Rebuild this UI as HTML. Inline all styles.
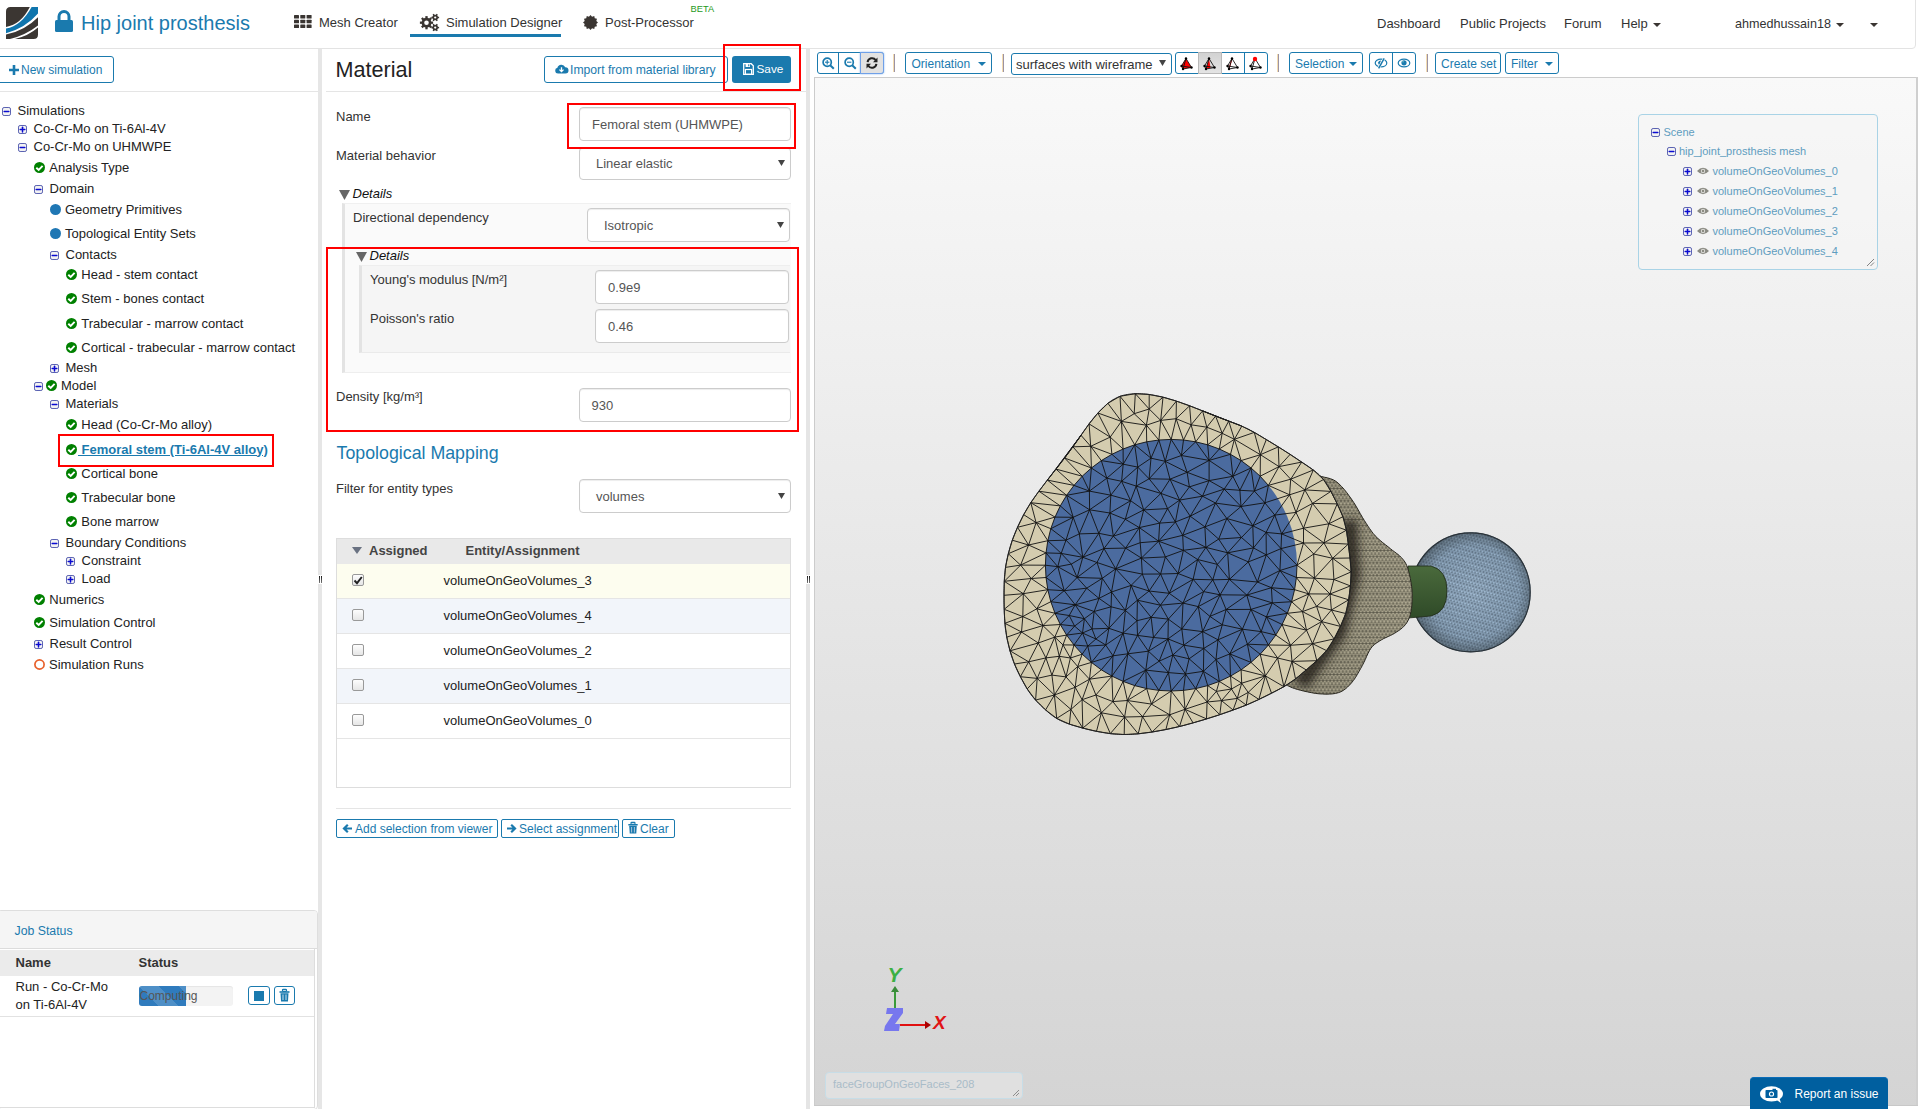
<!DOCTYPE html>
<html><head><meta charset="utf-8"><title>SimScale</title>
<style>
html,body{margin:0;padding:0;width:1918px;height:1109px;overflow:hidden;background:#fff;font-family:"Liberation Sans",sans-serif;}
.a{position:absolute;box-sizing:border-box;}
.t{position:absolute;white-space:nowrap;}
svg{position:absolute;overflow:visible;}
</style></head><body>
<div class="a" style="left:-4px;top:-5px;width:1920px;height:54px;border:1px solid #e3e3e3;border-radius:4px;background:#fff;"></div>
<svg style="left:6px;top:7px" width="32" height="32" viewBox="0 0 32 32">
<defs><clipPath id="lg"><path d="M4.5 0 H32 V27.5 Q32 32 27.5 32 H0 V4.5 Q0 0 4.5 0Z"/></clipPath></defs>
<g clip-path="url(#lg)">
<rect width="32" height="32" fill="#fff"/>
<path d="M0 0H23.8Q15 17.5 0 19.9Z" fill="#3b3632"/>
<path d="M0 21.6Q15.5 18.8 25.6 0H32V6.6Q19 21.5 0 26.2Z" fill="#0f75ad"/>
<path d="M0 27.6Q19 23.5 32 10.2V18.4Q20 27.8 4 32H0Z" fill="#3b3632"/>
<path d="M9 32Q22 29.2 32 20.6V32Z" fill="#3b3632"/>
</g></svg>
<svg style="left:55px;top:10px" width="18" height="22" viewBox="0 0 18 22">
<path d="M4 10 V6.5 A5 5 0 0 1 14 6.5 V10" stroke="#1a7aae" stroke-width="3" fill="none"/>
<rect x="0" y="10" width="18" height="12" rx="1.5" fill="#1a7aae"/></svg>
<div class="t" style="left:81px;top:13.07px;font-size:20px;line-height:20px;color:#1a7aae;font-weight:normal;font-style:normal;">Hip joint prosthesis</div>
<svg style="left:294px;top:15px" width="18" height="14" viewBox="0 0 18 14"><rect x="0.0" y="0.0" width="5" height="3.6" rx="0.6" fill="#3a3532"/><rect x="6.3" y="0.0" width="5" height="3.6" rx="0.6" fill="#3a3532"/><rect x="12.6" y="0.0" width="5" height="3.6" rx="0.6" fill="#3a3532"/><rect x="0.0" y="4.7" width="5" height="3.6" rx="0.6" fill="#3a3532"/><rect x="6.3" y="4.7" width="5" height="3.6" rx="0.6" fill="#3a3532"/><rect x="12.6" y="4.7" width="5" height="3.6" rx="0.6" fill="#3a3532"/><rect x="0.0" y="9.4" width="5" height="3.6" rx="0.6" fill="#3a3532"/><rect x="6.3" y="9.4" width="5" height="3.6" rx="0.6" fill="#3a3532"/><rect x="12.6" y="9.4" width="5" height="3.6" rx="0.6" fill="#3a3532"/></svg>
<div class="t" style="left:319px;top:16.00px;font-size:13px;line-height:13px;color:#333;font-weight:normal;font-style:normal;">Mesh Creator</div>
<svg style="left:416px;top:10px" width="30" height="26" viewBox="0 0 30 26"><circle cx="10.5" cy="12.7" r="4.9" fill="#3a3532"/><rect x="9.35" y="6.10" width="2.3" height="2.70" fill="#3a3532" transform="rotate(0.0 10.5 12.7)"/><rect x="9.35" y="6.10" width="2.3" height="2.70" fill="#3a3532" transform="rotate(45.0 10.5 12.7)"/><rect x="9.35" y="6.10" width="2.3" height="2.70" fill="#3a3532" transform="rotate(90.0 10.5 12.7)"/><rect x="9.35" y="6.10" width="2.3" height="2.70" fill="#3a3532" transform="rotate(135.0 10.5 12.7)"/><rect x="9.35" y="6.10" width="2.3" height="2.70" fill="#3a3532" transform="rotate(180.0 10.5 12.7)"/><rect x="9.35" y="6.10" width="2.3" height="2.70" fill="#3a3532" transform="rotate(225.0 10.5 12.7)"/><rect x="9.35" y="6.10" width="2.3" height="2.70" fill="#3a3532" transform="rotate(270.0 10.5 12.7)"/><rect x="9.35" y="6.10" width="2.3" height="2.70" fill="#3a3532" transform="rotate(315.0 10.5 12.7)"/><circle cx="10.5" cy="12.7" r="2.3" fill="#fff"/><circle cx="19.2" cy="7.5" r="2.8" fill="#3a3532"/><rect x="18.45" y="3.60" width="1.5" height="2.10" fill="#3a3532" transform="rotate(30.0 19.2 7.5)"/><rect x="18.45" y="3.60" width="1.5" height="2.10" fill="#3a3532" transform="rotate(90.0 19.2 7.5)"/><rect x="18.45" y="3.60" width="1.5" height="2.10" fill="#3a3532" transform="rotate(150.0 19.2 7.5)"/><rect x="18.45" y="3.60" width="1.5" height="2.10" fill="#3a3532" transform="rotate(210.0 19.2 7.5)"/><rect x="18.45" y="3.60" width="1.5" height="2.10" fill="#3a3532" transform="rotate(270.0 19.2 7.5)"/><rect x="18.45" y="3.60" width="1.5" height="2.10" fill="#3a3532" transform="rotate(330.0 19.2 7.5)"/><circle cx="19.2" cy="7.5" r="1.1" fill="#fff"/><circle cx="19.2" cy="17.6" r="2.8" fill="#3a3532"/><rect x="18.45" y="13.70" width="1.5" height="2.10" fill="#3a3532" transform="rotate(30.0 19.2 17.6)"/><rect x="18.45" y="13.70" width="1.5" height="2.10" fill="#3a3532" transform="rotate(90.0 19.2 17.6)"/><rect x="18.45" y="13.70" width="1.5" height="2.10" fill="#3a3532" transform="rotate(150.0 19.2 17.6)"/><rect x="18.45" y="13.70" width="1.5" height="2.10" fill="#3a3532" transform="rotate(210.0 19.2 17.6)"/><rect x="18.45" y="13.70" width="1.5" height="2.10" fill="#3a3532" transform="rotate(270.0 19.2 17.6)"/><rect x="18.45" y="13.70" width="1.5" height="2.10" fill="#3a3532" transform="rotate(330.0 19.2 17.6)"/><circle cx="19.2" cy="17.6" r="1.1" fill="#fff"/></svg>
<div class="t" style="left:446px;top:16.00px;font-size:13px;line-height:13px;color:#333;font-weight:normal;font-style:normal;">Simulation Designer</div>
<div class="a" style="left:410px;top:34px;width:151px;height:3px;background:#1a7aae;"></div>
<svg style="left:583px;top:15px" width="15" height="15" viewBox="0 0 18 18"><polygon points="18.00,9.00 15.95,10.86 16.79,13.50 14.09,14.09 13.50,16.79 10.86,15.95 9.00,18.00 7.14,15.95 4.50,16.79 3.91,14.09 1.21,13.50 2.05,10.86 0.00,9.00 2.05,7.14 1.21,4.50 3.91,3.91 4.50,1.21 7.14,2.05 9.00,0.00 10.86,2.05 13.50,1.21 14.09,3.91 16.79,4.50 15.95,7.14 " fill="#3a3532"/></svg>
<div class="t" style="left:605px;top:16.00px;font-size:13px;line-height:13px;color:#333;font-weight:normal;font-style:normal;">Post-Processor</div>
<div class="t" style="left:690.5px;top:5.13px;font-size:9.3px;line-height:9.3px;color:#1e9a22;font-weight:normal;font-style:normal;">BETA</div>
<div class="t" style="left:1377px;top:16.50px;font-size:13px;line-height:13px;color:#333;font-weight:normal;font-style:normal;">Dashboard</div>
<div class="t" style="left:1460px;top:16.50px;font-size:13px;line-height:13px;color:#333;font-weight:normal;font-style:normal;">Public Projects</div>
<div class="t" style="left:1564px;top:16.50px;font-size:13px;line-height:13px;color:#333;font-weight:normal;font-style:normal;">Forum</div>
<div class="t" style="left:1621px;top:16.50px;font-size:13px;line-height:13px;color:#333;font-weight:normal;font-style:normal;">Help</div>
<svg style="left:1653px;top:23px" width="8" height="4" viewBox="0 0 8 4"><polygon points="0,0 8,0 4.0,4" fill="#3a3532"/></svg>
<div class="t" style="left:1735px;top:17.53px;font-size:12.6px;line-height:12.6px;color:#333;font-weight:normal;font-style:normal;">ahmedhussain18</div>
<svg style="left:1836px;top:23px" width="8" height="4" viewBox="0 0 8 4"><polygon points="0,0 8,0 4.0,4" fill="#3a3532"/></svg>
<svg style="left:1870px;top:23px" width="8" height="4" viewBox="0 0 8 4"><polygon points="0,0 8,0 4.0,4" fill="#3a3532"/></svg>
<div class="a" style="left:-4px;top:56px;width:118px;height:27px;border:1px solid #1a7aae;border-radius:3px;"></div>
<svg style="left:9px;top:65px" width="10" height="10" viewBox="0 0 10 10"><path d="M5 0V10M0 5H10" stroke="#1a7aae" stroke-width="2.6"/></svg>
<div class="t" style="left:21px;top:63.84px;font-size:12px;line-height:12px;color:#1a7aae;font-weight:normal;font-style:normal;">New simulation</div>
<div class="a" style="left:0px;top:91px;width:318px;height:1px;background:#e5e5e5;"></div>
<svg style="left:2px;top:107px" width="9" height="9" viewBox="0 0 9 9"><rect x="0.5" y="0.5" width="8" height="8" rx="1.6" fill="#f2f2f2" stroke="#5a62b2" stroke-width="1"/><path d="M2.2 4.6H6.8" stroke="#0a0ad2" stroke-width="1.5" stroke-linecap="round"/></svg>
<div class="t" style="left:17.5px;top:103.70px;font-size:13px;line-height:13px;color:#222;font-weight:normal;font-style:normal;">Simulations</div>
<svg style="left:18px;top:125px" width="9" height="9" viewBox="0 0 9 9"><rect x="0.5" y="0.5" width="8" height="8" rx="1.6" fill="#f2f2f2" stroke="#5a62b2" stroke-width="1"/><path d="M2.2 4.6H6.8" stroke="#0a0ad2" stroke-width="1.5" stroke-linecap="round"/><path d="M4.5 2.3V6.9" stroke="#0a0ad2" stroke-width="1.5" stroke-linecap="round"/></svg>
<div class="t" style="left:33.5px;top:121.70px;font-size:13px;line-height:13px;color:#222;font-weight:normal;font-style:normal;">Co-Cr-Mo on Ti-6Al-4V</div>
<svg style="left:18px;top:143px" width="9" height="9" viewBox="0 0 9 9"><rect x="0.5" y="0.5" width="8" height="8" rx="1.6" fill="#f2f2f2" stroke="#5a62b2" stroke-width="1"/><path d="M2.2 4.6H6.8" stroke="#0a0ad2" stroke-width="1.5" stroke-linecap="round"/></svg>
<div class="t" style="left:33.5px;top:139.80px;font-size:13px;line-height:13px;color:#222;font-weight:normal;font-style:normal;">Co-Cr-Mo on UHMWPE</div>
<svg style="left:34px;top:162px" width="11" height="11" viewBox="0 0 11 11"><circle cx="5.5" cy="5.5" r="5.5" fill="#008000"/><path d="M2.3 5.7 L4.7 8 L8.6 3.9" stroke="#fff" stroke-width="1.9" fill="none"/></svg>
<div class="t" style="left:49.3px;top:160.50px;font-size:13px;line-height:13px;color:#222;font-weight:normal;font-style:normal;">Analysis Type</div>
<svg style="left:34px;top:185px" width="9" height="9" viewBox="0 0 9 9"><rect x="0.5" y="0.5" width="8" height="8" rx="1.6" fill="#f2f2f2" stroke="#5a62b2" stroke-width="1"/><path d="M2.2 4.6H6.8" stroke="#0a0ad2" stroke-width="1.5" stroke-linecap="round"/></svg>
<div class="t" style="left:49.5px;top:181.80px;font-size:13px;line-height:13px;color:#222;font-weight:normal;font-style:normal;">Domain</div>
<svg style="left:50px;top:204px" width="11" height="11" viewBox="0 0 11 11"><circle cx="5.5" cy="5.5" r="5.5" fill="#1f77b4"/></svg>
<div class="t" style="left:65px;top:202.60px;font-size:13px;line-height:13px;color:#222;font-weight:normal;font-style:normal;">Geometry Primitives</div>
<svg style="left:50px;top:228px" width="11" height="11" viewBox="0 0 11 11"><circle cx="5.5" cy="5.5" r="5.5" fill="#1f77b4"/></svg>
<div class="t" style="left:65px;top:226.50px;font-size:13px;line-height:13px;color:#222;font-weight:normal;font-style:normal;">Topological Entity Sets</div>
<svg style="left:50px;top:251px" width="9" height="9" viewBox="0 0 9 9"><rect x="0.5" y="0.5" width="8" height="8" rx="1.6" fill="#f2f2f2" stroke="#5a62b2" stroke-width="1"/><path d="M2.2 4.6H6.8" stroke="#0a0ad2" stroke-width="1.5" stroke-linecap="round"/></svg>
<div class="t" style="left:65.5px;top:247.60px;font-size:13px;line-height:13px;color:#222;font-weight:normal;font-style:normal;">Contacts</div>
<svg style="left:66px;top:269px" width="11" height="11" viewBox="0 0 11 11"><circle cx="5.5" cy="5.5" r="5.5" fill="#008000"/><path d="M2.3 5.7 L4.7 8 L8.6 3.9" stroke="#fff" stroke-width="1.9" fill="none"/></svg>
<div class="t" style="left:81.3px;top:268.40px;font-size:13px;line-height:13px;color:#222;font-weight:normal;font-style:normal;">Head - stem contact</div>
<svg style="left:66px;top:293px" width="11" height="11" viewBox="0 0 11 11"><circle cx="5.5" cy="5.5" r="5.5" fill="#008000"/><path d="M2.3 5.7 L4.7 8 L8.6 3.9" stroke="#fff" stroke-width="1.9" fill="none"/></svg>
<div class="t" style="left:81.3px;top:292.40px;font-size:13px;line-height:13px;color:#222;font-weight:normal;font-style:normal;">Stem - bones contact</div>
<svg style="left:66px;top:318px" width="11" height="11" viewBox="0 0 11 11"><circle cx="5.5" cy="5.5" r="5.5" fill="#008000"/><path d="M2.3 5.7 L4.7 8 L8.6 3.9" stroke="#fff" stroke-width="1.9" fill="none"/></svg>
<div class="t" style="left:81.3px;top:316.80px;font-size:13px;line-height:13px;color:#222;font-weight:normal;font-style:normal;">Trabecular - marrow contact</div>
<svg style="left:66px;top:342px" width="11" height="11" viewBox="0 0 11 11"><circle cx="5.5" cy="5.5" r="5.5" fill="#008000"/><path d="M2.3 5.7 L4.7 8 L8.6 3.9" stroke="#fff" stroke-width="1.9" fill="none"/></svg>
<div class="t" style="left:81.3px;top:340.80px;font-size:13px;line-height:13px;color:#222;font-weight:normal;font-style:normal;">Cortical - trabecular - marrow contact</div>
<svg style="left:50px;top:364px" width="9" height="9" viewBox="0 0 9 9"><rect x="0.5" y="0.5" width="8" height="8" rx="1.6" fill="#f2f2f2" stroke="#5a62b2" stroke-width="1"/><path d="M2.2 4.6H6.8" stroke="#0a0ad2" stroke-width="1.5" stroke-linecap="round"/><path d="M4.5 2.3V6.9" stroke="#0a0ad2" stroke-width="1.5" stroke-linecap="round"/></svg>
<div class="t" style="left:65.5px;top:361.40px;font-size:13px;line-height:13px;color:#222;font-weight:normal;font-style:normal;">Mesh</div>
<svg style="left:34px;top:382px" width="9" height="9" viewBox="0 0 9 9"><rect x="0.5" y="0.5" width="8" height="8" rx="1.6" fill="#f2f2f2" stroke="#5a62b2" stroke-width="1"/><path d="M2.2 4.6H6.8" stroke="#0a0ad2" stroke-width="1.5" stroke-linecap="round"/></svg>
<svg style="left:46px;top:380px" width="11" height="11" viewBox="0 0 11 11"><circle cx="5.5" cy="5.5" r="5.5" fill="#008000"/><path d="M2.3 5.7 L4.7 8 L8.6 3.9" stroke="#fff" stroke-width="1.9" fill="none"/></svg>
<div class="t" style="left:61px;top:379.40px;font-size:13px;line-height:13px;color:#222;font-weight:normal;font-style:normal;">Model</div>
<svg style="left:50px;top:400px" width="9" height="9" viewBox="0 0 9 9"><rect x="0.5" y="0.5" width="8" height="8" rx="1.6" fill="#f2f2f2" stroke="#5a62b2" stroke-width="1"/><path d="M2.2 4.6H6.8" stroke="#0a0ad2" stroke-width="1.5" stroke-linecap="round"/></svg>
<div class="t" style="left:65.5px;top:397.40px;font-size:13px;line-height:13px;color:#222;font-weight:normal;font-style:normal;">Materials</div>
<svg style="left:66px;top:419px" width="11" height="11" viewBox="0 0 11 11"><circle cx="5.5" cy="5.5" r="5.5" fill="#008000"/><path d="M2.3 5.7 L4.7 8 L8.6 3.9" stroke="#fff" stroke-width="1.9" fill="none"/></svg>
<div class="t" style="left:81.3px;top:418.40px;font-size:13px;line-height:13px;color:#222;font-weight:normal;font-style:normal;">Head (Co-Cr-Mo alloy)</div>
<svg style="left:66px;top:444px" width="11" height="11" viewBox="0 0 11 11"><circle cx="5.5" cy="5.5" r="5.5" fill="#008000"/><path d="M2.3 5.7 L4.7 8 L8.6 3.9" stroke="#fff" stroke-width="1.9" fill="none"/></svg>
<div class="t" style="left:78px;top:442.50px;font-size:13px;line-height:13px;color:#1a7aae;font-weight:bold;font-style:normal;text-decoration:underline;">&nbsp;Femoral stem (Ti-6Al-4V alloy)</div>
<div class="a" style="left:58px;top:434px;width:216px;height:33px;border:2px solid #f00;"></div>
<svg style="left:66px;top:468px" width="11" height="11" viewBox="0 0 11 11"><circle cx="5.5" cy="5.5" r="5.5" fill="#008000"/><path d="M2.3 5.7 L4.7 8 L8.6 3.9" stroke="#fff" stroke-width="1.9" fill="none"/></svg>
<div class="t" style="left:81.3px;top:466.50px;font-size:13px;line-height:13px;color:#222;font-weight:normal;font-style:normal;">Cortical bone</div>
<svg style="left:66px;top:492px" width="11" height="11" viewBox="0 0 11 11"><circle cx="5.5" cy="5.5" r="5.5" fill="#008000"/><path d="M2.3 5.7 L4.7 8 L8.6 3.9" stroke="#fff" stroke-width="1.9" fill="none"/></svg>
<div class="t" style="left:81.3px;top:490.80px;font-size:13px;line-height:13px;color:#222;font-weight:normal;font-style:normal;">Trabecular bone</div>
<svg style="left:66px;top:516px" width="11" height="11" viewBox="0 0 11 11"><circle cx="5.5" cy="5.5" r="5.5" fill="#008000"/><path d="M2.3 5.7 L4.7 8 L8.6 3.9" stroke="#fff" stroke-width="1.9" fill="none"/></svg>
<div class="t" style="left:81.3px;top:514.90px;font-size:13px;line-height:13px;color:#222;font-weight:normal;font-style:normal;">Bone marrow</div>
<svg style="left:50px;top:539px" width="9" height="9" viewBox="0 0 9 9"><rect x="0.5" y="0.5" width="8" height="8" rx="1.6" fill="#f2f2f2" stroke="#5a62b2" stroke-width="1"/><path d="M2.2 4.6H6.8" stroke="#0a0ad2" stroke-width="1.5" stroke-linecap="round"/></svg>
<div class="t" style="left:65.5px;top:535.70px;font-size:13px;line-height:13px;color:#222;font-weight:normal;font-style:normal;">Boundary Conditions</div>
<svg style="left:66px;top:557px" width="9" height="9" viewBox="0 0 9 9"><rect x="0.5" y="0.5" width="8" height="8" rx="1.6" fill="#f2f2f2" stroke="#5a62b2" stroke-width="1"/><path d="M2.2 4.6H6.8" stroke="#0a0ad2" stroke-width="1.5" stroke-linecap="round"/><path d="M4.5 2.3V6.9" stroke="#0a0ad2" stroke-width="1.5" stroke-linecap="round"/></svg>
<div class="t" style="left:81.5px;top:553.70px;font-size:13px;line-height:13px;color:#222;font-weight:normal;font-style:normal;">Constraint</div>
<svg style="left:66px;top:575px" width="9" height="9" viewBox="0 0 9 9"><rect x="0.5" y="0.5" width="8" height="8" rx="1.6" fill="#f2f2f2" stroke="#5a62b2" stroke-width="1"/><path d="M2.2 4.6H6.8" stroke="#0a0ad2" stroke-width="1.5" stroke-linecap="round"/><path d="M4.5 2.3V6.9" stroke="#0a0ad2" stroke-width="1.5" stroke-linecap="round"/></svg>
<div class="t" style="left:81.5px;top:571.70px;font-size:13px;line-height:13px;color:#222;font-weight:normal;font-style:normal;">Load</div>
<svg style="left:34px;top:594px" width="11" height="11" viewBox="0 0 11 11"><circle cx="5.5" cy="5.5" r="5.5" fill="#008000"/><path d="M2.3 5.7 L4.7 8 L8.6 3.9" stroke="#fff" stroke-width="1.9" fill="none"/></svg>
<div class="t" style="left:49.3px;top:592.50px;font-size:13px;line-height:13px;color:#222;font-weight:normal;font-style:normal;">Numerics</div>
<svg style="left:34px;top:617px" width="11" height="11" viewBox="0 0 11 11"><circle cx="5.5" cy="5.5" r="5.5" fill="#008000"/><path d="M2.3 5.7 L4.7 8 L8.6 3.9" stroke="#fff" stroke-width="1.9" fill="none"/></svg>
<div class="t" style="left:49.3px;top:616.20px;font-size:13px;line-height:13px;color:#222;font-weight:normal;font-style:normal;">Simulation Control</div>
<svg style="left:34px;top:640px" width="9" height="9" viewBox="0 0 9 9"><rect x="0.5" y="0.5" width="8" height="8" rx="1.6" fill="#f2f2f2" stroke="#5a62b2" stroke-width="1"/><path d="M2.2 4.6H6.8" stroke="#0a0ad2" stroke-width="1.5" stroke-linecap="round"/><path d="M4.5 2.3V6.9" stroke="#0a0ad2" stroke-width="1.5" stroke-linecap="round"/></svg>
<div class="t" style="left:49.5px;top:637.40px;font-size:13px;line-height:13px;color:#222;font-weight:normal;font-style:normal;">Result Control</div>
<svg style="left:34px;top:659px" width="11" height="11" viewBox="0 0 11 11"><circle cx="5.5" cy="5.5" r="4.6" fill="none" stroke="#e8602a" stroke-width="1.7"/></svg>
<div class="t" style="left:49px;top:658.20px;font-size:13px;line-height:13px;color:#222;font-weight:normal;font-style:normal;">Simulation Runs</div>
<div class="a" style="left:-3px;top:910px;width:321px;height:200px;border:1px solid #dedede;border-radius:4px;background:#fff;"></div>
<div class="a" style="left:-2px;top:911px;width:319px;height:38px;background:#f5f5f5;border-bottom:1px solid #dcdcdc;border-radius:3px 3px 0 0;"></div>
<div class="t" style="left:14.5px;top:924.59px;font-size:12.3px;line-height:12.3px;color:#1a7aae;font-weight:normal;font-style:normal;">Job Status</div>
<div class="a" style="left:-2px;top:949px;width:317px;height:159px;border-right:1px solid #ddd;border-bottom:1px solid #ddd;"></div>
<div class="a" style="left:0px;top:950px;width:314px;height:26px;background:#ebebeb;"></div>
<div class="t" style="left:15.5px;top:956.00px;font-size:13px;line-height:13px;color:#333;font-weight:bold;font-style:normal;">Name</div>
<div class="t" style="left:138.5px;top:956.00px;font-size:13px;line-height:13px;color:#333;font-weight:bold;font-style:normal;">Status</div>
<div class="t" style="left:15.5px;top:980.00px;font-size:13px;line-height:13px;color:#222;font-weight:normal;font-style:normal;">Run - Co-Cr-Mo</div>
<div class="t" style="left:15.5px;top:997.50px;font-size:13px;line-height:13px;color:#222;font-weight:normal;font-style:normal;">on Ti-6Al-4V</div>
<div class="a" style="left:0px;top:1016px;width:314px;height:1px;background:#e2e2e2;"></div>
<div class="a" style="left:139px;top:986px;width:94px;height:20px;background:#f3f3f3;border-radius:3px;box-shadow:inset 0 1px 1px rgba(0,0,0,.06);"></div>
<div class="a" style="left:139px;top:986px;width:47px;height:20px;border-radius:3px 0 0 3px;background:#2f7bbd;background-image:linear-gradient(45deg,rgba(255,255,255,.15) 25%,transparent 25%,transparent 50%,rgba(255,255,255,.15) 50%,rgba(255,255,255,.15) 75%,transparent 75%,transparent);background-size:40px 40px;"></div>
<div class="t" style="left:139.5px;top:990.34px;font-size:12px;line-height:12px;color:#555;font-weight:normal;font-style:normal;">Computing</div>
<div class="a" style="left:248px;top:986px;width:22px;height:19px;border:1px solid #1a7aae;border-radius:3px;"></div>
<div class="a" style="left:254px;top:991px;width:10px;height:10px;background:#1a7aae;"></div>
<div class="a" style="left:274px;top:986px;width:21px;height:19px;border:1px solid #1a7aae;border-radius:3px;"></div>
<svg style="left:279px;top:989px" width="11" height="13" viewBox="0 0 11 13"><rect x="3.5" y="0.3" width="4" height="2" rx="0.8" fill="none" stroke="#1a7aae" stroke-width="1.2"/><rect x="0.5" y="2.2" width="10" height="1.6" fill="#1a7aae"/><path d="M1.5 4.2H9.5L9 12.5H2Z" fill="#1a7aae"/><path d="M4 5.5V11M7 5.5V11" stroke="#cfe3ef" stroke-width="1"/></svg>
<div class="a" style="left:318px;top:49px;width:4px;height:1060px;background:#e6e6e6;"></div>
<div class="t" style="left:335.5px;top:58.72px;font-size:21.6px;line-height:21.6px;color:#222;font-weight:normal;font-style:normal;">Material</div>
<div class="a" style="left:544px;top:56px;width:184px;height:27px;border:1px solid #1a7aae;border-radius:3px;"></div>
<svg style="left:555px;top:64px" width="13" height="10" viewBox="0 0 14 11" preserveAspectRatio="none"><path d="M3.2 10.5 A3.2 3.2 0 0 1 2.6 4.2 A4.4 4.4 0 0 1 11 3.6 A3.4 3.4 0 0 1 11.2 10.5Z" fill="#1a7aae"/><path d="M7 3.5V8.2M4.8 6.2L7 8.4L9.2 6.2" stroke="#fff" stroke-width="1.4" fill="none"/></svg>
<div class="t" style="left:570px;top:63.67px;font-size:12.2px;line-height:12.2px;color:#1a7aae;font-weight:normal;font-style:normal;">Import from material library</div>
<div class="a" style="left:732px;top:56px;width:59px;height:27px;background:#1a7aae;border-radius:3px;"></div>
<svg style="left:743px;top:63px" width="11" height="12" viewBox="0 0 11 12"><path d="M0.7 0.7H8.2L10.3 2.8V11.3H0.7Z" fill="none" stroke="#fff" stroke-width="1.3"/><rect x="2.6" y="0.7" width="4.4" height="3.3" fill="#fff"/><rect x="5.2" y="1.3" width="1.1" height="2" fill="#1a7aae"/><rect x="2.4" y="6.5" width="6.2" height="4.8" fill="none" stroke="#fff" stroke-width="1.2"/></svg>
<div class="t" style="left:756.5px;top:64.01px;font-size:11.8px;line-height:11.8px;color:#fff;font-weight:normal;font-style:normal;">Save</div>
<div class="a" style="left:723px;top:44px;width:78px;height:47px;border:2px solid #f00;"></div>
<div class="a" style="left:326px;top:91px;width:480px;height:1px;background:#e5e5e5;"></div>
<div class="t" style="left:336px;top:109.80px;font-size:13px;line-height:13px;color:#333;font-weight:normal;font-style:normal;">Name</div>
<div class="a" style="left:579px;top:107px;width:212px;height:34px;border:1px solid #ccc;border-radius:4px;background:#fff;box-shadow:inset 0 1px 1px rgba(0,0,0,.075);"></div>
<div class="t" style="left:592px;top:117.80px;font-size:13px;line-height:13px;color:#555;font-weight:normal;font-style:normal;">Femoral stem (UHMWPE)</div>
<div class="t" style="left:336px;top:149.00px;font-size:13px;line-height:13px;color:#333;font-weight:normal;font-style:normal;">Material behavior</div>
<div class="a" style="left:579px;top:147px;width:212px;height:33px;border:1px solid #ccc;border-radius:4px;background:#fff;box-shadow:inset 0 1px 1px rgba(0,0,0,.075);"></div>
<div class="t" style="left:596px;top:157.30px;font-size:13px;line-height:13px;color:#555;font-weight:normal;font-style:normal;">Linear elastic</div>
<svg style="left:778px;top:160.0px" width="7" height="6" viewBox="0 0 7 6"><polygon points="0,0 7,0 3.5,6" fill="#444"/></svg>
<div class="a" style="left:567px;top:103px;width:229px;height:46px;border:2px solid #f00;"></div>
<svg style="left:339px;top:190px" width="11" height="10" viewBox="0 0 11 10"><polygon points="0,0 11,0 5.5,10" fill="#666"/></svg>
<div class="t" style="left:352.5px;top:187.00px;font-size:13px;line-height:13px;color:#111;font-weight:normal;font-style:italic;">Details</div>
<div class="a" style="left:342px;top:203px;width:449px;height:170px;background:#fafafa;border-left:3px solid #e3e3e3;border-top:1px solid #f0f0f0;border-bottom:1px solid #eee;"></div>
<div class="t" style="left:353px;top:211.00px;font-size:13px;line-height:13px;color:#333;font-weight:normal;font-style:normal;">Directional dependency</div>
<div class="a" style="left:587px;top:208px;width:203px;height:34px;border:1px solid #ccc;border-radius:4px;background:#fff;box-shadow:inset 0 1px 1px rgba(0,0,0,.075);"></div>
<div class="t" style="left:604px;top:218.80px;font-size:13px;line-height:13px;color:#555;font-weight:normal;font-style:normal;">Isotropic</div>
<svg style="left:777px;top:221.5px" width="7" height="6" viewBox="0 0 7 6"><polygon points="0,0 7,0 3.5,6" fill="#444"/></svg>
<svg style="left:356px;top:252px" width="11" height="10" viewBox="0 0 11 10"><polygon points="0,0 11,0 5.5,10" fill="#666"/></svg>
<div class="t" style="left:369.5px;top:249.00px;font-size:13px;line-height:13px;color:#111;font-weight:normal;font-style:italic;">Details</div>
<div class="a" style="left:359px;top:265px;width:431px;height:88px;background:#f5f5f5;border-left:3px solid #e3e3e3;border-top:1px solid #eee;border-bottom:1px solid #eaeaea;"></div>
<div class="t" style="left:370px;top:273.40px;font-size:13px;line-height:13px;color:#333;font-weight:normal;font-style:normal;">Young's modulus [N/m&sup2;]</div>
<div class="a" style="left:595px;top:270px;width:194px;height:34px;border:1px solid #ccc;border-radius:4px;background:#fff;box-shadow:inset 0 1px 1px rgba(0,0,0,.075);"></div>
<div class="t" style="left:608px;top:280.80px;font-size:13px;line-height:13px;color:#555;font-weight:normal;font-style:normal;">0.9e9</div>
<div class="t" style="left:370px;top:312.00px;font-size:13px;line-height:13px;color:#333;font-weight:normal;font-style:normal;">Poisson's ratio</div>
<div class="a" style="left:595px;top:309px;width:194px;height:34px;border:1px solid #ccc;border-radius:4px;background:#fff;box-shadow:inset 0 1px 1px rgba(0,0,0,.075);"></div>
<div class="t" style="left:608px;top:319.80px;font-size:13px;line-height:13px;color:#555;font-weight:normal;font-style:normal;">0.46</div>
<div class="t" style="left:336px;top:390.30px;font-size:13px;line-height:13px;color:#333;font-weight:normal;font-style:normal;">Density [kg/m&sup3;]</div>
<div class="a" style="left:579px;top:388px;width:212px;height:34px;border:1px solid #ccc;border-radius:4px;background:#fff;box-shadow:inset 0 1px 1px rgba(0,0,0,.075);"></div>
<div class="t" style="left:591.5px;top:398.80px;font-size:13px;line-height:13px;color:#555;font-weight:normal;font-style:normal;">930</div>
<div class="a" style="left:326px;top:247px;width:473px;height:185px;border:2px solid #f00;"></div>
<div class="t" style="left:336.5px;top:444.93px;font-size:17.8px;line-height:17.8px;color:#1a7aae;font-weight:normal;font-style:normal;">Topological Mapping</div>
<div class="t" style="left:336px;top:482.00px;font-size:13px;line-height:13px;color:#333;font-weight:normal;font-style:normal;">Filter for entity types</div>
<div class="a" style="left:579px;top:479px;width:212px;height:34px;border:1px solid #ccc;border-radius:4px;background:#fff;box-shadow:inset 0 1px 1px rgba(0,0,0,.075);"></div>
<div class="t" style="left:596px;top:489.80px;font-size:13px;line-height:13px;color:#555;font-weight:normal;font-style:normal;">volumes</div>
<svg style="left:778px;top:492.5px" width="7" height="6" viewBox="0 0 7 6"><polygon points="0,0 7,0 3.5,6" fill="#444"/></svg>
<div class="a" style="left:336px;top:538px;width:455px;height:250px;border:1px solid #ddd;background:#fff;"></div>
<div class="a" style="left:337px;top:539px;width:453px;height:25px;background:#e9e9e9;"></div>
<svg style="left:352px;top:547px" width="10" height="7" viewBox="0 0 10 7"><polygon points="0,0 10,0 5,7" fill="#6a7282"/></svg>
<div class="t" style="left:369px;top:544.00px;font-size:13px;line-height:13px;color:#444;font-weight:bold;font-style:normal;">Assigned</div>
<div class="t" style="left:465.5px;top:544.00px;font-size:13px;line-height:13px;color:#444;font-weight:bold;font-style:normal;">Entity/Assignment</div>
<div class="a" style="left:337px;top:564px;width:453px;height:35px;background:#fdfdef;border-bottom:1px solid #e5e5e5;"></div>
<div class="a" style="left:352px;top:574px;width:12px;height:12px;border:1px solid #999;border-radius:2px;background:linear-gradient(#fdfdfd,#e6e6e6);"></div>
<svg style="left:353px;top:576px" width="10" height="9" viewBox="0 0 10 9"><path d="M1.5 4.5L4 7.2L8.8 1" stroke="#222" stroke-width="1.9" fill="none"/></svg>
<div class="t" style="left:443.5px;top:574.00px;font-size:13px;line-height:13px;color:#222;font-weight:normal;font-style:normal;">volumeOnGeoVolumes_3</div>
<div class="a" style="left:337px;top:599px;width:453px;height:35px;background:#f2f5fa;border-bottom:1px solid #e5e5e5;"></div>
<div class="a" style="left:352px;top:609px;width:12px;height:12px;border:1px solid #999;border-radius:2px;background:linear-gradient(#fdfdfd,#e6e6e6);"></div>
<div class="t" style="left:443.5px;top:609.00px;font-size:13px;line-height:13px;color:#222;font-weight:normal;font-style:normal;">volumeOnGeoVolumes_4</div>
<div class="a" style="left:337px;top:634px;width:453px;height:35px;background:#fff;border-bottom:1px solid #e5e5e5;"></div>
<div class="a" style="left:352px;top:644px;width:12px;height:12px;border:1px solid #999;border-radius:2px;background:linear-gradient(#fdfdfd,#e6e6e6);"></div>
<div class="t" style="left:443.5px;top:644.00px;font-size:13px;line-height:13px;color:#222;font-weight:normal;font-style:normal;">volumeOnGeoVolumes_2</div>
<div class="a" style="left:337px;top:669px;width:453px;height:35px;background:#f2f5fa;border-bottom:1px solid #e5e5e5;"></div>
<div class="a" style="left:352px;top:679px;width:12px;height:12px;border:1px solid #999;border-radius:2px;background:linear-gradient(#fdfdfd,#e6e6e6);"></div>
<div class="t" style="left:443.5px;top:679.00px;font-size:13px;line-height:13px;color:#222;font-weight:normal;font-style:normal;">volumeOnGeoVolumes_1</div>
<div class="a" style="left:337px;top:704px;width:453px;height:35px;background:#fff;border-bottom:1px solid #e5e5e5;"></div>
<div class="a" style="left:352px;top:714px;width:12px;height:12px;border:1px solid #999;border-radius:2px;background:linear-gradient(#fdfdfd,#e6e6e6);"></div>
<div class="t" style="left:443.5px;top:714.00px;font-size:13px;line-height:13px;color:#222;font-weight:normal;font-style:normal;">volumeOnGeoVolumes_0</div>
<div class="a" style="left:336px;top:808px;width:455px;height:1px;background:#e5e5e5;"></div>
<div class="a" style="left:336px;top:819px;width:162px;height:19px;border:1px solid #1a7aae;border-radius:2px;"></div>
<div class="t" style="left:355px;top:822.84px;font-size:12px;line-height:12px;color:#1a7aae;font-weight:normal;font-style:normal;">Add selection from viewer</div>
<svg style="left:342px;top:823px" width="11" height="11" viewBox="0 0 11 11"><path d="M10 5.5H2.5M5.8 1.8L2 5.5L5.8 9.2" stroke="#1a7aae" stroke-width="2.2" fill="none"/></svg>
<div class="a" style="left:501px;top:819px;width:118px;height:19px;border:1px solid #1a7aae;border-radius:2px;"></div>
<div class="t" style="left:519px;top:822.84px;font-size:12px;line-height:12px;color:#1a7aae;font-weight:normal;font-style:normal;">Select assignment</div>
<svg style="left:506px;top:823px" width="11" height="11" viewBox="0 0 11 11"><path d="M1 5.5H8.5M5.2 1.8L9 5.5L5.2 9.2" stroke="#1a7aae" stroke-width="2.2" fill="none"/></svg>
<div class="a" style="left:622px;top:819px;width:53px;height:19px;border:1px solid #1a7aae;border-radius:2px;"></div>
<div class="t" style="left:640px;top:822.84px;font-size:12px;line-height:12px;color:#1a7aae;font-weight:normal;font-style:normal;">Clear</div>
<svg style="left:628px;top:822px" width="10" height="12" viewBox="0 0 10 12"><rect x="3" y="0.4" width="4" height="1.8" rx="0.6" fill="none" stroke="#1a7aae" stroke-width="1.1"/><rect x="0.3" y="2" width="9.4" height="1.5" fill="#1a7aae"/><path d="M1.2 3.8H8.8L8.3 11.6H1.7Z" fill="#1a7aae"/><path d="M3.6 5V10.5M6.4 5V10.5" stroke="#bcd" stroke-width="0.9"/></svg>
<div class="a" style="left:806px;top:49px;width:4px;height:1060px;background:#e5e5e5;"></div>
<div class="a" style="left:318px;top:575px;width:4px;height:9px;background:#fff;"></div>
<div class="a" style="left:319px;top:576px;width:1px;height:7px;background:linear-gradient(#1a1a1a,#777);"></div>
<div class="a" style="left:321px;top:576px;width:1px;height:7px;background:linear-gradient(#1a1a1a,#777);"></div>
<div class="a" style="left:806px;top:575px;width:4px;height:9px;background:#fff;"></div>
<div class="a" style="left:807px;top:576px;width:1px;height:7px;background:linear-gradient(#1a1a1a,#777);"></div>
<div class="a" style="left:809px;top:576px;width:1px;height:7px;background:linear-gradient(#1a1a1a,#777);"></div>
<div class="a" style="left:814px;top:77px;width:1104px;height:1029px;border-top:1px solid #ccc;border-left:1px solid #ccc;background:linear-gradient(#f9f9f9,#d4d4d4);"></div>
<div class="a" style="left:1916px;top:77px;width:2px;height:1029px;background:#cfcfcf;"></div>
<div class="a" style="left:814px;top:1105px;width:1104px;height:1px;background:#c8c8c8;"></div>
<div class="a" style="left:817px;top:52px;width:67px;height:22px;border:1px solid #1a7aae;border-radius:3px;background:#fff;"></div>
<div class="a" style="left:838px;top:52px;width:1px;height:22px;background:#1a7aae;"></div>
<div class="a" style="left:860px;top:52px;width:24px;height:22px;background:#e2e2e2;border:1px solid #6fa0e8;border-radius:0 3px 3px 0;box-shadow:0 0 2px #7fb0f0;"></div>
<svg style="left:822px;top:57px" width="13" height="13" viewBox="0 0 13 13"><circle cx="5.2" cy="5.2" r="4.1" fill="none" stroke="#1a7aae" stroke-width="1.7"/><path d="M8.2 8.2L11.8 11.8" stroke="#1a7aae" stroke-width="2"/><path d="M3 5.2H7.4" stroke="#1a7aae" stroke-width="1.1"/><path d="M5.2 3V7.4" stroke="#1a7aae" stroke-width="1.1"/></svg>
<svg style="left:844px;top:57px" width="13" height="13" viewBox="0 0 13 13"><circle cx="5.2" cy="5.2" r="4.1" fill="none" stroke="#1a7aae" stroke-width="1.7"/><path d="M8.2 8.2L11.8 11.8" stroke="#1a7aae" stroke-width="2"/><path d="M3 5.2H7.4" stroke="#1a7aae" stroke-width="1.1"/></svg>
<svg style="left:866px;top:57px" width="12" height="12" viewBox="0 0 12 12"><path d="M1.6 5.2A4.5 4.5 0 0 1 9.8 3.2" stroke="#222" stroke-width="2" fill="none"/><polygon points="11.5,0.6 11.5,5.2 7,5.2" fill="#222"/><path d="M10.4 6.8A4.5 4.5 0 0 1 2.2 8.8" stroke="#222" stroke-width="2" fill="none"/><polygon points="0.5,11.4 0.5,6.8 5,6.8" fill="#222"/></svg>
<div class="a" style="left:893px;top:54px;width:1px;height:18px;background:#f3dcb0;"></div>
<div class="a" style="left:894px;top:54px;width:1px;height:18px;background:#9c93a4;"></div>
<div class="a" style="left:905px;top:52px;width:87px;height:22px;border:1px solid #1a7aae;border-radius:3px;background:#fff;"></div>
<div class="t" style="left:911.5px;top:57.84px;font-size:12px;line-height:12px;color:#1a7aae;font-weight:normal;font-style:normal;">Orientation</div>
<svg style="left:978px;top:62px" width="8" height="4" viewBox="0 0 8 4"><polygon points="0,0 8,0 4.0,4" fill="#1a7aae"/></svg>
<div class="a" style="left:1002px;top:54px;width:1px;height:18px;background:#f3dcb0;"></div>
<div class="a" style="left:1003px;top:54px;width:1px;height:18px;background:#9c93a4;"></div>
<div class="a" style="left:1011px;top:53px;width:161px;height:22px;border:1px solid #1a7aae;border-radius:3px;background:#fff;"></div>
<div class="t" style="left:1016px;top:57.50px;font-size:13px;line-height:13px;color:#333;font-weight:normal;font-style:normal;">surfaces with wireframe</div>
<svg style="left:1159px;top:60px" width="7" height="6" viewBox="0 0 7 6"><polygon points="0,0 7,0 3.5,6" fill="#444"/></svg>
<div class="a" style="left:1175px;top:52px;width:93px;height:22px;border:1px solid #1a7aae;border-radius:3px;background:#fff;"></div>
<div class="a" style="left:1198px;top:52px;width:24px;height:22px;background:linear-gradient(#d2d2d2,#e4e4e4);border:1px solid #b8b8b8;"></div>
<div class="a" style="left:1244px;top:52px;width:1px;height:22px;background:#1a7aae;"></div>
<svg style="left:1180px;top:57px" width="13" height="14" viewBox="0 0 13 14"><polygon points="6,1.5 1.5,9 3,12 11.5,10.5" fill="#f00"/><path d="M6 1.5L1.5 9L3 12L11.5 10.5Z M6 1.5L3 12 M1.5 9L11.5 10.5" stroke="#111" stroke-width="0.9" fill="none"/><circle cx="6" cy="1.5" r="1.2" fill="#000"/><circle cx="1.5" cy="9" r="1.2" fill="#000"/><circle cx="11.5" cy="10.5" r="1.2" fill="#000"/><circle cx="3" cy="12" r="1.2" fill="#000"/></svg>
<svg style="left:1203px;top:57px" width="13" height="14" viewBox="0 0 13 14"><polygon points="6,1.5 3,12 7.5,10.8" fill="#f00"/><path d="M6 1.5L1.5 9L3 12L11.5 10.5Z M6 1.5L3 12 M1.5 9L11.5 10.5" stroke="#111" stroke-width="0.9" fill="none"/><circle cx="6" cy="1.5" r="1.2" fill="#000"/><circle cx="1.5" cy="9" r="1.2" fill="#000"/><circle cx="11.5" cy="10.5" r="1.2" fill="#000"/><circle cx="3" cy="12" r="1.2" fill="#000"/></svg>
<svg style="left:1226px;top:57px" width="13" height="14" viewBox="0 0 13 14"><path d="M6 1.5 L3 12" stroke="#f00" stroke-width="1"/><path d="M6 1.5L1.5 9L3 12L11.5 10.5Z M6 1.5L3 12 M1.5 9L11.5 10.5" stroke="#111" stroke-width="0.9" fill="none"/><circle cx="6" cy="1.5" r="1.2" fill="#000"/><circle cx="1.5" cy="9" r="1.2" fill="#000"/><circle cx="11.5" cy="10.5" r="1.2" fill="#000"/><circle cx="3" cy="12" r="1.2" fill="#000"/></svg>
<svg style="left:1249px;top:57px" width="13" height="14" viewBox="0 0 13 14"><path d="M6 1.5L1.5 9L3 12L11.5 10.5Z M6 1.5L3 12 M1.5 9L11.5 10.5" stroke="#111" stroke-width="0.9" fill="none"/><circle cx="6" cy="1.5" r="1.2" fill="#000"/><circle cx="1.5" cy="9" r="1.2" fill="#000"/><circle cx="11.5" cy="10.5" r="1.2" fill="#000"/><circle cx="3" cy="12" r="1.2" fill="#000"/><circle cx="6" cy="2.0" r="2.2" fill="#f00"/></svg>
<div class="a" style="left:1277px;top:54px;width:1px;height:18px;background:#f3dcb0;"></div>
<div class="a" style="left:1278px;top:54px;width:1px;height:18px;background:#9c93a4;"></div>
<div class="a" style="left:1289px;top:52px;width:74px;height:22px;border:1px solid #1a7aae;border-radius:3px;background:#fff;"></div>
<div class="t" style="left:1295px;top:57.84px;font-size:12px;line-height:12px;color:#1a7aae;font-weight:normal;font-style:normal;">Selection</div>
<svg style="left:1349px;top:62px" width="8" height="4" viewBox="0 0 8 4"><polygon points="0,0 8,0 4.0,4" fill="#1a7aae"/></svg>
<div class="a" style="left:1369px;top:52px;width:47px;height:22px;border:1px solid #1a7aae;border-radius:3px;background:#fff;"></div>
<div class="a" style="left:1392px;top:52px;width:1px;height:22px;background:#1a7aae;"></div>
<svg style="left:1374px;top:58px" width="14" height="11" viewBox="0 0 14 11"><ellipse cx="7" cy="5" rx="5.8" ry="3.8" fill="none" stroke="#1a7aae" stroke-width="1.2"/><path d="M7 2.4A2.6 2.6 0 0 0 5.6 7.3Z" fill="#1a7aae"/><path d="M10.2 0.3L4.6 10.3" stroke="#fff" stroke-width="2.6"/><path d="M10.2 0.3L4.6 10.3" stroke="#1a7aae" stroke-width="1.5"/></svg>
<svg style="left:1397px;top:58px" width="14" height="11" viewBox="0 0 14 11"><ellipse cx="7" cy="5" rx="5.8" ry="3.8" fill="none" stroke="#1a7aae" stroke-width="1.2"/><circle cx="7" cy="4.8" r="2.6" fill="#1a7aae"/><circle cx="6" cy="3.8" r="0.7" fill="#8cc"/></svg>
<div class="a" style="left:1426px;top:54px;width:1px;height:18px;background:#f3dcb0;"></div>
<div class="a" style="left:1427px;top:54px;width:1px;height:18px;background:#9c93a4;"></div>
<div class="a" style="left:1435px;top:52px;width:66px;height:22px;border:1px solid #1a7aae;border-radius:3px;background:#fff;"></div>
<div class="t" style="left:1441px;top:57.84px;font-size:12px;line-height:12px;color:#1a7aae;font-weight:normal;font-style:normal;">Create set</div>
<div class="a" style="left:1505px;top:52px;width:54px;height:22px;border:1px solid #1a7aae;border-radius:3px;background:#fff;"></div>
<div class="t" style="left:1511px;top:57.84px;font-size:12px;line-height:12px;color:#1a7aae;font-weight:normal;font-style:normal;">Filter</div>
<svg style="left:1545px;top:62px" width="8" height="4" viewBox="0 0 8 4"><polygon points="0,0 8,0 4.0,4" fill="#1a7aae"/></svg>
<div class="a" style="left:1638px;top:114px;width:240px;height:156px;border:1px solid #a9d3e6;border-radius:4px;background:rgba(245,245,245,.6);"></div>
<svg style="left:1651px;top:128px" width="9" height="9" viewBox="0 0 9 9"><rect x="0.5" y="0.5" width="8" height="8" rx="1.6" fill="#f2f2f2" stroke="#5a62b2" stroke-width="1"/><path d="M2.2 4.6H6.8" stroke="#0a0ad2" stroke-width="1.5" stroke-linecap="round"/></svg>
<div class="t" style="left:1663.5px;top:126.69px;font-size:11px;line-height:11px;color:#5f9dbf;font-weight:normal;font-style:normal;">Scene</div>
<svg style="left:1667px;top:147px" width="9" height="9" viewBox="0 0 9 9"><rect x="0.5" y="0.5" width="8" height="8" rx="1.6" fill="#f2f2f2" stroke="#5a62b2" stroke-width="1"/><path d="M2.2 4.6H6.8" stroke="#0a0ad2" stroke-width="1.5" stroke-linecap="round"/></svg>
<div class="t" style="left:1679px;top:145.89px;font-size:11px;line-height:11px;color:#5f9dbf;font-weight:normal;font-style:normal;">hip_joint_prosthesis mesh</div>
<svg style="left:1683px;top:167px" width="9" height="9" viewBox="0 0 9 9"><rect x="0.5" y="0.5" width="8" height="8" rx="1.6" fill="#f2f2f2" stroke="#5a62b2" stroke-width="1"/><path d="M2.2 4.6H6.8" stroke="#0a0ad2" stroke-width="1.5" stroke-linecap="round"/><path d="M4.5 2.3V6.9" stroke="#0a0ad2" stroke-width="1.5" stroke-linecap="round"/></svg>
<svg style="left:1697px;top:167px" width="12" height="8" viewBox="0 0 12 8"><path d="M0 4Q6 -2.5 12 4Q6 10.5 0 4Z" fill="#8a8a82"/><circle cx="6" cy="4" r="2.2" fill="#dcdcd8"/><circle cx="6" cy="4" r="1.2" fill="#8a8a82"/></svg>
<div class="t" style="left:1712.5px;top:165.69px;font-size:11px;line-height:11px;color:#5f9dbf;font-weight:normal;font-style:normal;">volumeOnGeoVolumes_0</div>
<svg style="left:1683px;top:187px" width="9" height="9" viewBox="0 0 9 9"><rect x="0.5" y="0.5" width="8" height="8" rx="1.6" fill="#f2f2f2" stroke="#5a62b2" stroke-width="1"/><path d="M2.2 4.6H6.8" stroke="#0a0ad2" stroke-width="1.5" stroke-linecap="round"/><path d="M4.5 2.3V6.9" stroke="#0a0ad2" stroke-width="1.5" stroke-linecap="round"/></svg>
<svg style="left:1697px;top:187px" width="12" height="8" viewBox="0 0 12 8"><path d="M0 4Q6 -2.5 12 4Q6 10.5 0 4Z" fill="#8a8a82"/><circle cx="6" cy="4" r="2.2" fill="#dcdcd8"/><circle cx="6" cy="4" r="1.2" fill="#8a8a82"/></svg>
<div class="t" style="left:1712.5px;top:185.69px;font-size:11px;line-height:11px;color:#5f9dbf;font-weight:normal;font-style:normal;">volumeOnGeoVolumes_1</div>
<svg style="left:1683px;top:207px" width="9" height="9" viewBox="0 0 9 9"><rect x="0.5" y="0.5" width="8" height="8" rx="1.6" fill="#f2f2f2" stroke="#5a62b2" stroke-width="1"/><path d="M2.2 4.6H6.8" stroke="#0a0ad2" stroke-width="1.5" stroke-linecap="round"/><path d="M4.5 2.3V6.9" stroke="#0a0ad2" stroke-width="1.5" stroke-linecap="round"/></svg>
<svg style="left:1697px;top:207px" width="12" height="8" viewBox="0 0 12 8"><path d="M0 4Q6 -2.5 12 4Q6 10.5 0 4Z" fill="#8a8a82"/><circle cx="6" cy="4" r="2.2" fill="#dcdcd8"/><circle cx="6" cy="4" r="1.2" fill="#8a8a82"/></svg>
<div class="t" style="left:1712.5px;top:205.69px;font-size:11px;line-height:11px;color:#5f9dbf;font-weight:normal;font-style:normal;">volumeOnGeoVolumes_2</div>
<svg style="left:1683px;top:227px" width="9" height="9" viewBox="0 0 9 9"><rect x="0.5" y="0.5" width="8" height="8" rx="1.6" fill="#f2f2f2" stroke="#5a62b2" stroke-width="1"/><path d="M2.2 4.6H6.8" stroke="#0a0ad2" stroke-width="1.5" stroke-linecap="round"/><path d="M4.5 2.3V6.9" stroke="#0a0ad2" stroke-width="1.5" stroke-linecap="round"/></svg>
<svg style="left:1697px;top:227px" width="12" height="8" viewBox="0 0 12 8"><path d="M0 4Q6 -2.5 12 4Q6 10.5 0 4Z" fill="#8a8a82"/><circle cx="6" cy="4" r="2.2" fill="#dcdcd8"/><circle cx="6" cy="4" r="1.2" fill="#8a8a82"/></svg>
<div class="t" style="left:1712.5px;top:225.69px;font-size:11px;line-height:11px;color:#5f9dbf;font-weight:normal;font-style:normal;">volumeOnGeoVolumes_3</div>
<svg style="left:1683px;top:247px" width="9" height="9" viewBox="0 0 9 9"><rect x="0.5" y="0.5" width="8" height="8" rx="1.6" fill="#f2f2f2" stroke="#5a62b2" stroke-width="1"/><path d="M2.2 4.6H6.8" stroke="#0a0ad2" stroke-width="1.5" stroke-linecap="round"/><path d="M4.5 2.3V6.9" stroke="#0a0ad2" stroke-width="1.5" stroke-linecap="round"/></svg>
<svg style="left:1697px;top:247px" width="12" height="8" viewBox="0 0 12 8"><path d="M0 4Q6 -2.5 12 4Q6 10.5 0 4Z" fill="#8a8a82"/><circle cx="6" cy="4" r="2.2" fill="#dcdcd8"/><circle cx="6" cy="4" r="1.2" fill="#8a8a82"/></svg>
<div class="t" style="left:1712.5px;top:245.69px;font-size:11px;line-height:11px;color:#5f9dbf;font-weight:normal;font-style:normal;">volumeOnGeoVolumes_4</div>
<svg style="left:1866px;top:258px" width="9" height="9" viewBox="0 0 9 9"><path d="M1 8L8 1M4.5 8L8 4.5" stroke="#666" stroke-width="0.8"/></svg>
<div class="a" style="left:825px;top:1072px;width:198px;height:27px;border:1px solid #c7dde7;border-radius:4px;background:#e0e0e0;"></div>
<div class="t" style="left:833px;top:1079.29px;font-size:11px;line-height:11px;color:#a9bcc8;font-weight:normal;font-style:normal;">faceGroupOnGeoFaces_208</div>
<svg style="left:1012px;top:1089px" width="8" height="8" viewBox="0 0 8 8"><path d="M1 7L7 1M4 7L7 4" stroke="#777" stroke-width="0.8"/></svg>
<div class="a" style="left:1750px;top:1077px;width:138px;height:40px;background:#005f9f;border-radius:4px 4px 0 0;border-top:1px solid #0a6cb8;"></div>
<svg style="left:1760px;top:1086px" width="24" height="17" viewBox="0 0 24 17"><ellipse cx="11.5" cy="7.8" rx="11.5" ry="7.6" fill="#fff"/><polygon points="15,13 21,17 19,11" fill="#fff"/><rect x="5.5" y="4" width="12" height="8" rx="0.8" fill="#005f9f"/><rect x="12.5" y="2.8" width="3.5" height="1.6" fill="#005f9f"/><circle cx="11.5" cy="8" r="2.6" fill="#fff"/><circle cx="11.5" cy="8" r="1.5" fill="#005f9f"/></svg>
<div class="t" style="left:1794.5px;top:1088.34px;font-size:12px;line-height:12px;color:#fff;font-weight:normal;font-style:normal;">Report an issue</div>
<svg style="left:880px;top:960px" width="75" height="75" viewBox="0 0 75 75">
<path d="M15 52V30" stroke="#3a9a3a" stroke-width="2"/>
<polygon points="11,32 19,32 15,26" fill="#3a8a3a"/>
<text x="7.5" y="21.5" font-family="Liberation Sans" font-weight="bold" font-style="italic" font-size="21" fill="#3cb043">Y</text>
<path d="M20 65H46" stroke="#e01010" stroke-width="2"/>
<polygon points="45,61 45,69 51,65" fill="#a00"/>
<text x="53" y="69" font-family="Liberation Sans" font-weight="bold" font-style="italic" font-size="19" fill="#e01515">X</text>
<polygon points="7,48 23,48 23,53 15,64 20,64 19,71 4,71 5,66 13,54 6,54" fill="#7777ee"/>
</svg>
<svg style="left:990px;top:380px" width="560" height="370" viewBox="0 0 560 370">
<defs>
<radialGradient id="sph" cx="0.52" cy="0.5" r="0.55"><stop offset="0" stop-color="#a8c2da"/><stop offset="0.7" stop-color="#94aec6"/><stop offset="1" stop-color="#55646f"/></radialGradient>
<linearGradient id="nk" x1="0" y1="0" x2="1" y2="0"><stop offset="0" stop-color="#a39d86"/><stop offset="1" stop-color="#b4ae96"/></linearGradient>
<linearGradient id="gr" x1="0" y1="0" x2="0" y2="1"><stop offset="0" stop-color="#4a6a3c"/><stop offset="1" stop-color="#2f4a28"/></linearGradient>
<pattern id="fn" width="3.6" height="6.2" patternUnits="userSpaceOnUse"><path d="M0 0H3.6M0 3.1H3.6M0 0L1.8 3.1L3.6 0M0 6.2L1.8 3.1L3.6 6.2" stroke="#1a1a14" stroke-width="0.45" fill="none"/></pattern>
<pattern id="fs" width="3.2" height="5.5" patternUnits="userSpaceOnUse" patternTransform="rotate(15)"><path d="M0 0H3.2M0 2.75H3.2M0 0L1.6 2.75L3.2 0M0 5.5L1.6 2.75L3.2 5.5" stroke="#1c2630" stroke-width="0.4" fill="none"/></pattern>
<filter id="bl" x="-50%" y="-50%" width="200%" height="200%"><feGaussianBlur stdDeviation="4"/></filter>
<clipPath id="nkc"><path d="M330.0 96.2 L331.8 96.6 L334.3 97.2 L337.2 97.8 L340.4 98.7 L343.5 99.9 L346.3 101.6 L348.9 103.8 L351.5 106.4 L354.1 109.3 L356.6 112.4 L359.0 115.7 L361.4 119.0 L363.7 122.4 L366.0 126.1 L368.2 129.9 L370.3 133.7 L372.4 137.3 L374.4 140.6 L376.3 143.5 L378.0 146.2 L379.7 148.7 L381.4 151.1 L383.2 153.5 L385.2 155.8 L387.5 158.1 L390.1 160.4 L392.8 162.7 L395.5 164.8 L398.1 166.8 L400.4 168.7 L402.5 170.4 L404.5 171.8 L406.3 173.2 L408.1 174.5 L409.7 175.9 L411.2 177.4 L412.6 179.0 L413.8 180.4 L414.9 182.0 L415.9 183.7 L416.8 185.7 L417.7 188.2 L418.6 191.2 L419.5 194.6 L420.3 198.4 L421.0 202.3 L421.6 206.2 L422.0 209.9 L422.2 213.6 L422.2 217.4 L422.1 221.2 L421.9 224.9 L421.5 228.4 L421.0 231.5 L420.4 234.2 L419.7 236.6 L418.9 238.8 L417.9 240.8 L416.8 242.7 L415.5 244.5 L414.0 246.2 L412.4 247.8 L410.6 249.3 L408.7 250.6 L406.7 251.9 L404.7 253.2 L402.6 254.4 L400.4 255.5 L398.2 256.5 L396.0 257.5 L393.8 258.5 L391.7 259.7 L389.7 260.9 L387.9 262.1 L386.0 263.3 L384.3 264.7 L382.5 266.3 L380.9 268.3 L379.4 270.7 L378.0 273.4 L376.6 276.4 L375.3 279.5 L373.8 282.6 L372.3 285.6 L370.6 288.6 L368.9 291.7 L367.1 294.8 L365.3 297.8 L363.4 300.5 L361.4 303.0 L359.4 305.2 L357.5 307.1 L355.4 308.9 L353.3 310.4 L351.0 311.7 L348.4 312.7 L345.6 313.4 L342.5 313.9 L339.2 314.1 L335.9 314.2 L332.4 314.0 L329.0 313.8 L325.4 313.4 L321.5 312.7 L317.6 311.9 L313.8 311.1 L310.3 310.2 L307.3 309.4 L304.7 308.6 L302.5 307.8 L300.5 307.0 L298.9 306.2 L297.5 305.6 L296.5 305.1 L300.0 260.0 L310.0 140.0Z"/></clipPath>
</defs>
<circle cx="480.70000000000005" cy="212.29999999999995" r="60" fill="url(#sph)"/>
<circle cx="480.70000000000005" cy="212.29999999999995" r="60" fill="url(#fs)" opacity="0.75"/>
<circle cx="480.70000000000005" cy="212.29999999999995" r="59.5" fill="none" stroke="#2a3238" stroke-width="1.2"/>
<path d="M418 186 L441 186 Q457 190 457 211 Q457 232 441 236 L418 238Z" fill="url(#gr)" stroke="#1f2a18" stroke-width="0.8"/>
<path d="M330.0 96.2 L331.8 96.6 L334.3 97.2 L337.2 97.8 L340.4 98.7 L343.5 99.9 L346.3 101.6 L348.9 103.8 L351.5 106.4 L354.1 109.3 L356.6 112.4 L359.0 115.7 L361.4 119.0 L363.7 122.4 L366.0 126.1 L368.2 129.9 L370.3 133.7 L372.4 137.3 L374.4 140.6 L376.3 143.5 L378.0 146.2 L379.7 148.7 L381.4 151.1 L383.2 153.5 L385.2 155.8 L387.5 158.1 L390.1 160.4 L392.8 162.7 L395.5 164.8 L398.1 166.8 L400.4 168.7 L402.5 170.4 L404.5 171.8 L406.3 173.2 L408.1 174.5 L409.7 175.9 L411.2 177.4 L412.6 179.0 L413.8 180.4 L414.9 182.0 L415.9 183.7 L416.8 185.7 L417.7 188.2 L418.6 191.2 L419.5 194.6 L420.3 198.4 L421.0 202.3 L421.6 206.2 L422.0 209.9 L422.2 213.6 L422.2 217.4 L422.1 221.2 L421.9 224.9 L421.5 228.4 L421.0 231.5 L420.4 234.2 L419.7 236.6 L418.9 238.8 L417.9 240.8 L416.8 242.7 L415.5 244.5 L414.0 246.2 L412.4 247.8 L410.6 249.3 L408.7 250.6 L406.7 251.9 L404.7 253.2 L402.6 254.4 L400.4 255.5 L398.2 256.5 L396.0 257.5 L393.8 258.5 L391.7 259.7 L389.7 260.9 L387.9 262.1 L386.0 263.3 L384.3 264.7 L382.5 266.3 L380.9 268.3 L379.4 270.7 L378.0 273.4 L376.6 276.4 L375.3 279.5 L373.8 282.6 L372.3 285.6 L370.6 288.6 L368.9 291.7 L367.1 294.8 L365.3 297.8 L363.4 300.5 L361.4 303.0 L359.4 305.2 L357.5 307.1 L355.4 308.9 L353.3 310.4 L351.0 311.7 L348.4 312.7 L345.6 313.4 L342.5 313.9 L339.2 314.1 L335.9 314.2 L332.4 314.0 L329.0 313.8 L325.4 313.4 L321.5 312.7 L317.6 311.9 L313.8 311.1 L310.3 310.2 L307.3 309.4 L304.7 308.6 L302.5 307.8 L300.5 307.0 L298.9 306.2 L297.5 305.6 L296.5 305.1 L300.0 260.0 L310.0 140.0Z" fill="url(#nk)"/>
<path d="M330.0 96.2 L331.8 96.6 L334.3 97.2 L337.2 97.8 L340.4 98.7 L343.5 99.9 L346.3 101.6 L348.9 103.8 L351.5 106.4 L354.1 109.3 L356.6 112.4 L359.0 115.7 L361.4 119.0 L363.7 122.4 L366.0 126.1 L368.2 129.9 L370.3 133.7 L372.4 137.3 L374.4 140.6 L376.3 143.5 L378.0 146.2 L379.7 148.7 L381.4 151.1 L383.2 153.5 L385.2 155.8 L387.5 158.1 L390.1 160.4 L392.8 162.7 L395.5 164.8 L398.1 166.8 L400.4 168.7 L402.5 170.4 L404.5 171.8 L406.3 173.2 L408.1 174.5 L409.7 175.9 L411.2 177.4 L412.6 179.0 L413.8 180.4 L414.9 182.0 L415.9 183.7 L416.8 185.7 L417.7 188.2 L418.6 191.2 L419.5 194.6 L420.3 198.4 L421.0 202.3 L421.6 206.2 L422.0 209.9 L422.2 213.6 L422.2 217.4 L422.1 221.2 L421.9 224.9 L421.5 228.4 L421.0 231.5 L420.4 234.2 L419.7 236.6 L418.9 238.8 L417.9 240.8 L416.8 242.7 L415.5 244.5 L414.0 246.2 L412.4 247.8 L410.6 249.3 L408.7 250.6 L406.7 251.9 L404.7 253.2 L402.6 254.4 L400.4 255.5 L398.2 256.5 L396.0 257.5 L393.8 258.5 L391.7 259.7 L389.7 260.9 L387.9 262.1 L386.0 263.3 L384.3 264.7 L382.5 266.3 L380.9 268.3 L379.4 270.7 L378.0 273.4 L376.6 276.4 L375.3 279.5 L373.8 282.6 L372.3 285.6 L370.6 288.6 L368.9 291.7 L367.1 294.8 L365.3 297.8 L363.4 300.5 L361.4 303.0 L359.4 305.2 L357.5 307.1 L355.4 308.9 L353.3 310.4 L351.0 311.7 L348.4 312.7 L345.6 313.4 L342.5 313.9 L339.2 314.1 L335.9 314.2 L332.4 314.0 L329.0 313.8 L325.4 313.4 L321.5 312.7 L317.6 311.9 L313.8 311.1 L310.3 310.2 L307.3 309.4 L304.7 308.6 L302.5 307.8 L300.5 307.0 L298.9 306.2 L297.5 305.6 L296.5 305.1 L300.0 260.0 L310.0 140.0Z" fill="url(#fn)" opacity="0.8"/>
<g clip-path="url(#nkc)"><path d="M359 140 L362 195 L348 252 L310 304" stroke="#25231c" stroke-width="16" fill="none" filter="url(#bl)" opacity="0.85"/></g>
<path d="M330.0 96.2 L331.8 96.6 L334.3 97.2 L337.2 97.8 L340.4 98.7 L343.5 99.9 L346.3 101.6 L348.9 103.8 L351.5 106.4 L354.1 109.3 L356.6 112.4 L359.0 115.7 L361.4 119.0 L363.7 122.4 L366.0 126.1 L368.2 129.9 L370.3 133.7 L372.4 137.3 L374.4 140.6 L376.3 143.5 L378.0 146.2 L379.7 148.7 L381.4 151.1 L383.2 153.5 L385.2 155.8 L387.5 158.1 L390.1 160.4 L392.8 162.7 L395.5 164.8 L398.1 166.8 L400.4 168.7 L402.5 170.4 L404.5 171.8 L406.3 173.2 L408.1 174.5 L409.7 175.9 L411.2 177.4 L412.6 179.0 L413.8 180.4 L414.9 182.0 L415.9 183.7 L416.8 185.7 L417.7 188.2 L418.6 191.2 L419.5 194.6 L420.3 198.4 L421.0 202.3 L421.6 206.2 L422.0 209.9 L422.2 213.6 L422.2 217.4 L422.1 221.2 L421.9 224.9 L421.5 228.4 L421.0 231.5 L420.4 234.2 L419.7 236.6 L418.9 238.8 L417.9 240.8 L416.8 242.7 L415.5 244.5 L414.0 246.2 L412.4 247.8 L410.6 249.3 L408.7 250.6 L406.7 251.9 L404.7 253.2 L402.6 254.4 L400.4 255.5 L398.2 256.5 L396.0 257.5 L393.8 258.5 L391.7 259.7 L389.7 260.9 L387.9 262.1 L386.0 263.3 L384.3 264.7 L382.5 266.3 L380.9 268.3 L379.4 270.7 L378.0 273.4 L376.6 276.4 L375.3 279.5 L373.8 282.6 L372.3 285.6 L370.6 288.6 L368.9 291.7 L367.1 294.8 L365.3 297.8 L363.4 300.5 L361.4 303.0 L359.4 305.2 L357.5 307.1 L355.4 308.9 L353.3 310.4 L351.0 311.7 L348.4 312.7 L345.6 313.4 L342.5 313.9 L339.2 314.1 L335.9 314.2 L332.4 314.0 L329.0 313.8 L325.4 313.4 L321.5 312.7 L317.6 311.9 L313.8 311.1 L310.3 310.2 L307.3 309.4 L304.7 308.6 L302.5 307.8 L300.5 307.0 L298.9 306.2 L297.5 305.6 L296.5 305.1 L300.0 260.0 L310.0 140.0Z" fill="none" stroke="#2a2820" stroke-width="1"/>
<path d="M145.3 13.7 L147.3 13.7 L149.3 13.7 L151.3 13.8 L153.4 13.9 L155.4 14.0 L157.4 14.2 L159.4 14.5 L161.3 14.8 L163.3 15.1 L165.3 15.5 L167.2 15.9 L169.2 16.3 L171.1 16.7 L173.1 17.2 L175.0 17.7 L176.9 18.2 L178.8 18.8 L180.7 19.4 L182.7 19.9 L184.6 20.5 L186.5 21.2 L188.4 21.8 L190.3 22.4 L192.1 23.1 L194.0 23.8 L195.9 24.4 L197.8 25.1 L199.7 25.8 L201.5 26.5 L203.4 27.2 L205.3 28.0 L207.1 28.7 L209.0 29.4 L210.8 30.2 L212.7 30.9 L214.6 31.6 L216.4 32.4 L218.3 33.1 L220.1 33.9 L222.0 34.6 L223.8 35.4 L225.7 36.1 L227.6 36.8 L229.4 37.6 L231.3 38.3 L233.2 39.0 L235.0 39.7 L236.9 40.4 L238.8 41.1 L240.6 41.8 L242.5 42.5 L244.4 43.2 L246.2 43.9 L248.1 44.6 L249.9 45.4 L251.8 46.2 L253.6 47.0 L255.4 47.8 L257.2 48.6 L259.0 49.5 L260.7 50.5 L262.5 51.4 L264.2 52.4 L266.0 53.4 L267.7 54.4 L269.4 55.4 L271.1 56.4 L272.8 57.5 L274.5 58.5 L276.3 59.5 L278.0 60.6 L279.7 61.6 L281.4 62.6 L283.1 63.7 L284.8 64.7 L286.5 65.8 L288.2 66.8 L289.9 67.9 L291.6 68.9 L293.3 70.0 L295.0 71.1 L296.7 72.2 L298.3 73.2 L300.0 74.3 L301.7 75.4 L303.3 76.5 L305.0 77.6 L306.7 78.7 L308.3 79.9 L310.0 81.0 L311.7 82.1 L313.3 83.2 L315.0 84.3 L316.7 85.4 L318.3 86.5 L320.0 87.7 L321.6 88.8 L323.2 90.0 L324.8 91.1 L326.3 92.4 L327.8 93.6 L329.3 94.9 L330.6 96.3 L332.0 97.7 L333.2 99.2 L334.4 100.7 L335.6 102.3 L336.6 103.9 L337.7 105.5 L338.7 107.2 L339.6 109.0 L340.6 110.7 L341.5 112.5 L342.4 114.3 L343.3 116.0 L344.2 117.8 L345.1 119.6 L346.0 121.4 L346.9 123.2 L347.7 125.0 L348.6 126.8 L349.5 128.6 L350.3 130.4 L351.1 132.2 L351.8 134.1 L352.6 135.9 L353.2 137.8 L353.9 139.6 L354.4 141.5 L354.9 143.4 L355.4 145.3 L355.8 147.3 L356.2 149.2 L356.5 151.2 L356.9 153.1 L357.1 155.1 L357.4 157.1 L357.7 159.1 L357.9 161.1 L358.2 163.0 L358.4 165.0 L358.7 167.0 L358.9 169.0 L359.2 171.0 L359.4 173.0 L359.7 174.9 L359.9 176.9 L360.1 178.9 L360.3 180.9 L360.5 182.9 L360.7 184.9 L360.9 186.9 L361.0 188.8 L361.0 190.8 L361.1 192.8 L361.1 194.8 L361.0 196.8 L360.9 198.8 L360.8 200.7 L360.7 202.7 L360.5 204.7 L360.3 206.7 L360.1 208.7 L359.8 210.7 L359.6 212.7 L359.4 214.6 L359.1 216.6 L358.8 218.6 L358.5 220.6 L358.2 222.5 L357.9 224.5 L357.5 226.4 L357.1 228.4 L356.6 230.3 L356.1 232.2 L355.5 234.1 L354.9 235.9 L354.2 237.8 L353.5 239.6 L352.7 241.4 L351.9 243.3 L351.1 245.1 L350.2 246.9 L349.3 248.7 L348.4 250.4 L347.5 252.2 L346.6 254.0 L345.7 255.8 L344.8 257.5 L343.8 259.3 L342.9 261.0 L341.9 262.7 L340.9 264.4 L339.8 266.1 L338.7 267.7 L337.5 269.3 L336.3 270.9 L335.1 272.4 L333.8 273.8 L332.4 275.3 L331.0 276.7 L329.6 278.1 L328.2 279.4 L326.7 280.8 L325.2 282.1 L323.7 283.4 L322.2 284.7 L320.7 286.1 L319.2 287.4 L317.7 288.7 L316.2 290.0 L314.7 291.3 L313.1 292.6 L311.6 293.9 L310.1 295.2 L308.6 296.5 L307.0 297.7 L305.4 298.9 L303.9 300.1 L302.2 301.3 L300.6 302.4 L299.0 303.5 L297.3 304.6 L295.6 305.6 L293.9 306.7 L292.2 307.6 L290.4 308.6 L288.7 309.5 L286.9 310.5 L285.1 311.4 L283.3 312.3 L281.5 313.2 L279.8 314.1 L278.0 315.0 L276.2 315.9 L274.4 316.8 L272.6 317.6 L270.8 318.5 L269.0 319.4 L267.2 320.3 L265.4 321.1 L263.6 321.9 L261.8 322.7 L259.9 323.5 L258.1 324.3 L256.2 325.1 L254.4 325.8 L252.5 326.5 L250.7 327.3 L248.8 328.0 L246.9 328.7 L245.0 329.3 L243.1 330.0 L241.3 330.7 L239.4 331.4 L237.5 332.0 L235.6 332.7 L233.7 333.3 L231.8 334.0 L229.9 334.6 L228.0 335.3 L226.1 335.9 L224.2 336.5 L222.3 337.1 L220.4 337.7 L218.5 338.3 L216.6 338.9 L214.7 339.5 L212.8 340.1 L210.9 340.6 L208.9 341.2 L207.0 341.7 L205.1 342.3 L203.2 342.8 L201.3 343.4 L199.3 343.9 L197.4 344.4 L195.5 345.0 L193.5 345.5 L191.6 346.0 L189.7 346.4 L187.7 346.9 L185.8 347.4 L183.8 347.8 L181.9 348.2 L179.9 348.7 L178.0 349.1 L176.0 349.5 L174.0 349.9 L172.1 350.3 L170.1 350.6 L168.1 351.0 L166.2 351.3 L164.2 351.7 L162.2 352.0 L160.3 352.3 L158.3 352.6 L156.3 352.8 L154.3 353.1 L152.3 353.3 L150.4 353.6 L148.4 353.8 L146.4 354.0 L144.4 354.1 L142.4 354.3 L140.4 354.4 L138.4 354.5 L136.4 354.5 L134.4 354.5 L132.4 354.5 L130.5 354.4 L128.5 354.3 L126.5 354.2 L124.5 354.1 L122.5 353.9 L120.5 353.7 L118.6 353.4 L116.6 353.1 L114.6 352.8 L112.6 352.5 L110.7 352.1 L108.7 351.8 L106.8 351.4 L104.8 351.0 L102.8 350.6 L100.9 350.1 L99.0 349.7 L97.0 349.2 L95.1 348.7 L93.1 348.2 L91.2 347.7 L89.3 347.1 L87.4 346.6 L85.4 346.0 L83.5 345.5 L81.6 344.9 L79.7 344.2 L77.9 343.6 L76.0 342.9 L74.2 342.2 L72.4 341.4 L70.6 340.6 L68.9 339.7 L67.2 338.7 L65.5 337.7 L63.9 336.7 L62.3 335.5 L60.7 334.3 L59.2 333.1 L57.7 331.8 L56.2 330.5 L54.7 329.2 L53.3 327.8 L51.8 326.4 L50.4 325.0 L49.0 323.6 L47.6 322.2 L46.2 320.8 L44.9 319.3 L43.6 317.8 L42.4 316.3 L41.1 314.7 L40.0 313.1 L38.8 311.5 L37.8 309.9 L36.7 308.2 L35.7 306.5 L34.7 304.7 L33.7 303.0 L32.8 301.3 L31.8 299.5 L30.9 297.7 L30.0 295.9 L29.1 294.2 L28.2 292.4 L27.3 290.6 L26.5 288.8 L25.7 287.0 L24.9 285.1 L24.2 283.3 L23.4 281.4 L22.8 279.6 L22.1 277.7 L21.5 275.8 L20.9 273.9 L20.3 272.0 L19.8 270.1 L19.3 268.1 L18.8 266.2 L18.3 264.3 L17.9 262.3 L17.4 260.4 L17.0 258.4 L16.6 256.5 L16.3 254.5 L16.0 252.5 L15.7 250.6 L15.4 248.6 L15.2 246.6 L15.1 244.6 L14.9 242.7 L14.8 240.7 L14.6 238.7 L14.5 236.7 L14.4 234.7 L14.3 232.7 L14.3 230.7 L14.2 228.7 L14.1 226.7 L14.1 224.7 L14.0 222.7 L14.0 220.7 L14.0 218.7 L14.0 216.7 L14.0 214.7 L14.0 212.7 L14.0 210.7 L14.1 208.7 L14.1 206.7 L14.2 204.7 L14.2 202.7 L14.3 200.7 L14.4 198.7 L14.5 196.7 L14.7 194.7 L14.9 192.8 L15.1 190.8 L15.3 188.8 L15.6 186.8 L15.9 184.9 L16.3 182.9 L16.6 181.0 L17.1 179.0 L17.5 177.1 L18.0 175.1 L18.5 173.2 L19.0 171.3 L19.5 169.3 L20.0 167.4 L20.6 165.5 L21.2 163.6 L21.8 161.7 L22.5 159.8 L23.1 158.0 L23.8 156.1 L24.6 154.2 L25.3 152.4 L26.1 150.5 L26.9 148.7 L27.7 146.9 L28.5 145.1 L29.4 143.3 L30.2 141.5 L31.1 139.7 L32.0 137.9 L32.9 136.1 L33.8 134.3 L34.8 132.6 L35.8 130.9 L36.8 129.1 L37.8 127.4 L38.9 125.7 L39.9 124.1 L41.0 122.4 L42.1 120.7 L43.3 119.1 L44.4 117.4 L45.6 115.8 L46.7 114.2 L47.9 112.6 L49.1 111.0 L50.3 109.4 L51.5 107.8 L52.7 106.2 L53.9 104.6 L55.1 103.0 L56.3 101.4 L57.6 99.8 L58.8 98.2 L60.0 96.7 L61.3 95.1 L62.5 93.5 L63.7 92.0 L65.0 90.4 L66.2 88.8 L67.5 87.2 L68.7 85.7 L69.9 84.1 L71.1 82.5 L72.4 80.9 L73.6 79.3 L74.8 77.8 L76.0 76.2 L77.2 74.6 L78.4 73.0 L79.6 71.4 L80.8 69.7 L81.9 68.1 L83.1 66.5 L84.3 64.9 L85.4 63.2 L86.6 61.6 L87.7 60.0 L88.9 58.3 L90.0 56.7 L91.1 55.0 L92.3 53.4 L93.4 51.7 L94.6 50.1 L95.7 48.5 L96.9 46.9 L98.0 45.2 L99.2 43.6 L100.4 42.0 L101.7 40.5 L102.9 38.9 L104.2 37.4 L105.5 35.8 L106.8 34.3 L108.1 32.8 L109.4 31.4 L110.8 29.9 L112.2 28.5 L113.6 27.1 L115.1 25.8 L116.5 24.5 L118.0 23.2 L119.6 22.0 L121.2 20.9 L122.8 19.8 L124.5 18.9 L126.2 18.0 L127.9 17.2 L129.7 16.5 L131.5 15.8 L133.4 15.3 L135.3 14.9 L137.3 14.5 L139.3 14.2 L141.2 14.0 L143.3 13.8Z" fill="#d4ccaf"/>
<circle cx="181.20000000000005" cy="185.20000000000005" r="125.8" fill="#4b6b9f"/>
<path d="M60.8 221.7L74.2 210.7M48.9 111.2L57.4 100.1M219.1 100.6L197.1 92.3M236.8 138.5L262.8 145.8M111.3 289.8L101.4 282.4M333.9 162.9L323.7 174.0M313.5 163.0L313.5 148.2M151.4 178.1L168.6 161.2M31.5 252.0L32.8 236.6M137.9 273.8L123.0 275.8M249.9 110.3L234.2 109.1M358.7 219.8L341.4 230.0M251.8 46.1L264.3 52.4M189.5 346.5L175.9 349.5M203.1 342.9L195.0 329.3M121.9 296.1L105.9 315.0M239.8 273.9L228.0 259.8M92.2 96.2L99.4 111.1M199.1 278.8L213.4 291.3M101.4 282.4L92.2 274.2M261.0 88.0L270.2 96.2M92.5 253.0L105.9 259.0M227.4 184.4L222.8 199.8M278.4 265.0L257.4 264.2M175.4 176.9L151.4 178.1M175.9 349.5L162.1 352.0M306.0 132.4L313.5 148.2M99.1 43.9L107.9 33.0M161.1 237.3L147.4 220.2M249.9 110.3L264.4 111.1M102.0 248.9L118.9 248.3M270.2 96.2L278.4 105.4M300.5 265.3L322.5 263.7M311.7 82.1L289.0 86.6M182.8 275.0L169.2 281.2M212.6 251.6L228.0 259.8M57.8 209.7L33.3 213.7M323.3 90.0L333.5 99.5M326.6 226.4L340.0 214.0M61.9 295.1L55.9 277.9M161.1 237.3L147.5 255.4M107.9 33.0L117.9 23.3M97.8 266.1L105.9 259.0M168.9 60.0L161.0 78.2M87.7 286.5L76.0 296.9M101.4 282.4L115.7 265.0M76.0 296.9L80.4 278.0M168.6 161.2L169.7 143.1M60.8 221.7L57.8 209.7M326.6 226.4L341.4 230.0M333.5 99.5L340.9 111.4M260.9 229.4L271.2 251.6M92.8 348.1L79.4 344.1M140.6 120.7L135.3 139.3M231.5 320.6L226.4 311.4M38.6 165.0L46.1 142.6M133.1 69.0L120.2 57.1M57.8 209.7L56.0 197.5M229.3 301.4L213.4 291.3M14.2 229.3L33.3 213.7M251.7 303.2L241.5 309.0M121.1 226.8L109.0 218.4M141.1 205.4L159.1 211.0M120.8 115.2L119.9 133.0M153.7 129.9L169.7 143.1M79.4 344.1L66.7 338.4M57.4 100.1L84.0 105.4M276.3 174.9L263.5 167.9M92.2 274.2L97.8 266.1M301.6 221.7L297.4 233.3M214.9 146.9L228.7 159.1M276.3 174.9L267.4 202.0M236.8 138.5L251.5 157.5M141.1 205.4L135.4 230.4M288.3 66.9L270.4 74.7M107.9 33.0L131.4 41.4M47.2 298.4L55.9 277.9M175.4 176.9L170.6 194.0M155.8 290.1L178.5 292.6M155.8 290.1L137.9 273.8M121.5 212.0L125.7 188.8M225.6 36.1L232.2 53.3M99.4 111.1L120.8 115.2M66.0 89.1L92.2 96.2M247.3 318.4L241.5 309.0M258.3 181.9L263.5 167.9M30.4 296.7L38.7 281.8M240.5 296.1L239.8 273.9M281.5 313.2L275.4 295.9M297.4 233.3L292.1 244.5M108.8 153.3L119.9 133.0M111.3 80.6L100.7 66.3M115.7 265.0L133.1 253.1M56.0 172.9L30.6 185.1M65.0 233.3L52.9 245.6M69.3 276.3L73.0 264.9M161.1 237.3L170.4 225.2M361.1 191.9L360.4 205.9M158.4 271.2L147.5 255.4M292.1 244.5L316.5 250.2M173.0 17.2L170.7 40.4M302.0 281.4L287.6 278.0M251.1 80.6L244.4 59.3M33.7 134.7L46.1 142.6M70.3 125.9L76.6 115.3M76.0 296.9L85.2 307.3M170.6 194.0L179.2 213.3M207.6 179.5L203.1 199.3M92.8 177.3L81.3 184.1M168.6 161.2L192.7 155.3M134.6 337.0L137.4 320.5M74.2 210.7L67.8 186.7M177.6 128.6L169.7 143.1M261.0 88.0L242.9 96.3M20.0 270.8L16.8 257.2M96.7 208.2L85.2 224.8M74.2 210.7L96.7 208.2M67.8 186.7L87.1 197.5M156.4 45.2L144.2 33.7M333.9 162.9L338.8 143.8M158.4 271.2L137.9 273.8M101.4 282.4L123.0 275.8M64.8 257.1L48.3 263.0M274.9 122.8L262.8 145.8M193.5 60.0L191.4 75.5M64.8 257.1L52.9 245.6M239.4 199.4L230.1 214.8M251.5 157.5L263.5 167.9M225.6 36.1L216.8 47.2M60.8 221.7L85.2 224.8M151.4 178.1L152.3 194.1M161.1 237.3L163.5 257.5M134.2 354.5L134.6 337.0M215.9 167.4L228.7 159.1M135.6 168.1L125.7 188.8M135.6 168.1L151.4 178.1M145.3 13.7L159.2 29.0M326.6 226.4L331.6 241.6M343.9 199.5L342.6 178.3M55.4 185.2L67.8 186.7M270.2 96.2L289.0 86.6M185.4 142.0L169.7 143.1M121.9 296.1L122.9 321.6M156.4 45.2L170.7 40.4M293.9 306.7L287.6 278.0M111.3 80.6L116.8 98.2M99.1 43.9L100.7 66.3M297.4 233.3L276.4 236.9M199.1 278.8L195.5 294.0M30.6 185.1L38.6 165.0M64.8 257.1L55.9 277.9M137.9 273.8L147.5 255.4M144.7 64.8L147.8 87.1M360.0 178.0L361.1 191.9M208.3 226.6L230.1 214.8M159.2 14.5L159.2 29.0M57.4 100.1L76.6 115.3M193.0 223.1L208.3 226.6M360.4 205.9L343.9 199.5M65.0 137.1L70.3 125.9M104.2 231.5L94.4 238.7M60.8 148.7L83.2 137.3M244.4 59.3L270.4 74.7M24.5 284.0L20.0 270.8M243.1 330.0L231.5 320.6M116.8 98.2L133.2 84.2M323.7 174.0L313.5 163.0M227.4 184.4L239.4 199.4M97.8 266.1L92.5 253.0M281.4 207.7L256.8 215.1M108.8 153.3L114.0 168.5M106.5 351.3L111.4 332.8M197.1 92.3L219.1 80.4M270.2 274.2L275.4 295.9M152.5 336.6L134.6 337.0M340.0 214.0L318.8 213.9M236.8 138.5L228.7 159.1M252.4 249.2L228.0 259.8M66.7 338.4L64.4 315.0M251.1 289.8L240.5 296.1M200.2 136.2L214.9 146.9M352.9 136.7L338.8 143.8M107.0 182.5L112.3 198.3M232.3 244.8L219.9 236.4M336.5 270.6L326.8 280.7M240.5 296.1L229.3 301.4M205.7 308.6L195.0 329.3M185.4 142.0L192.7 155.3M121.9 74.3L133.1 69.0M168.9 310.4L155.8 290.1M289.0 86.6L270.4 74.7M208.3 226.6L213.6 211.6M326.8 280.7L316.2 289.9M147.8 87.1L146.2 106.1M15.5 187.4L18.3 173.7M133.1 253.1L123.0 275.8M133.1 69.0L144.7 64.8M108.8 153.3L92.8 177.3M14.2 229.3L32.8 236.6M173.0 17.2L186.4 21.1M47.2 298.4L38.7 281.8M344.1 258.9L331.6 241.6M149.3 147.6L169.7 143.1M300.7 99.2L299.6 114.8M247.3 318.4L251.7 303.2M18.3 173.7L22.3 160.2M276.4 236.9L271.2 251.6M181.2 59.4L186.1 38.7M168.9 310.4L156.7 308.6M76.6 115.3L83.2 137.3M324.4 198.2L340.0 214.0M159.1 98.8L175.2 81.3M46.8 228.8L33.3 213.7M343.9 199.5L324.4 198.2M297.4 233.3L312.5 231.6M73.0 264.9L80.4 278.0M213.8 268.4L193.8 265.2M186.4 21.1L199.6 25.8M256.2 325.1L243.1 330.0M170.7 40.4L159.2 29.0M156.7 308.6L144.7 305.6M147.0 240.7L133.1 253.1M205.7 61.8L217.7 64.8M193.5 60.0L201.1 44.8M301.6 221.7L282.3 222.9M193.0 223.1L170.4 225.2M119.9 133.0L140.6 120.7M76.6 115.3L99.4 111.1M251.8 46.1L244.4 59.3M147.0 240.7L135.4 230.4M232.3 244.8L228.0 259.8M291.0 168.6L313.5 163.0M243.1 330.0L229.8 334.7M71.2 173.4L81.3 184.1M57.4 100.1L66.0 89.1M240.5 296.1L241.5 309.0M193.5 60.0L186.1 38.7M239.8 273.9L257.4 264.2M76.6 255.1L64.8 257.1M217.7 64.8L229.3 69.0M251.1 80.6L270.4 74.7M131.4 41.4L120.2 57.1M231.5 320.6L217.1 322.0M147.0 240.7L147.5 255.4M60.8 148.7L76.0 160.2M288.3 66.9L289.0 86.6M135.4 230.4L147.4 220.2M326.8 280.7L302.0 281.4M66.0 89.1L74.6 78.0M148.2 353.8L152.5 336.6M147.8 87.1L161.0 78.2M306.0 132.4L299.6 114.8M314.8 109.9L300.7 99.2M237.7 172.8L263.5 167.9M92.2 274.2L84.0 265.0M179.2 213.3L203.1 199.3M274.9 122.8L251.0 126.5M276.3 59.6L288.3 66.9M76.0 160.2L83.2 137.3M57.8 160.7L38.6 165.0M256.2 325.1L258.2 312.4M344.1 258.9L322.5 263.7M212.6 251.6L213.8 268.4M270.2 96.2L264.4 111.1M181.2 311.0L161.4 324.1M74.2 210.7L85.2 224.8M84.0 265.0L76.6 255.1M56.0 197.5L41.2 198.5M188.1 193.5L170.6 194.0M178.3 239.1L178.0 258.9M358.3 164.1L342.6 178.3M81.3 184.1L87.1 197.5M148.2 353.8L134.2 354.5M121.1 226.8L118.9 248.3M225.6 123.1L251.0 126.5M231.5 320.6L241.5 309.0M18.3 173.7L38.6 165.0M162.1 352.0L179.7 334.8M212.6 30.9L251.8 46.1M178.5 292.6L182.8 275.0M163.5 257.5L147.5 255.4M170.6 194.0L152.3 194.1M130.0 16.3L144.2 33.7M99.4 111.1L116.8 98.2M316.5 250.2L322.5 263.7M48.9 111.2L70.3 125.9M267.4 202.0L289.9 190.5M57.8 209.7L46.8 228.8M175.2 81.3L161.0 78.2M213.6 211.6L230.1 214.8M133.1 69.0L133.2 84.2M300.5 265.3L302.0 281.4M274.9 122.8L299.6 114.8M156.7 308.6L155.8 290.1M193.4 170.3L207.6 179.5M102.0 248.9L104.2 231.5M168.9 60.0L175.2 81.3M193.4 170.3L192.7 155.3M84.0 265.0L73.0 264.9M252.4 249.2L236.1 229.5M261.0 88.0L249.9 110.3M144.7 64.8L161.0 78.2M120.8 115.2L116.8 98.2M189.6 120.1L180.0 99.2M185.4 142.0L168.6 161.2M121.5 212.0L135.4 230.4M178.3 239.1L163.5 257.5M278.4 265.0L287.6 278.0M306.4 197.5L324.4 198.2M360.4 205.9L340.0 214.0M153.7 129.9L177.6 128.6M258.2 312.4L275.4 295.9M119.9 133.0L123.3 156.2M144.7 305.6L137.4 320.5M304.6 209.7L289.9 190.5M264.3 52.4L276.3 59.6M31.5 252.0L48.3 263.0M69.3 276.3L64.8 257.1M144.2 33.7L159.2 29.0M278.4 105.4L299.6 114.8M92.2 274.2L87.7 286.5M101.4 282.4L99.5 299.2M168.9 310.4L178.5 292.6M219.1 100.6L212.5 116.2M229.3 301.4L226.4 311.4M162.1 352.0L148.2 353.8M149.3 147.6L123.3 156.2M101.4 88.0L99.4 111.1M30.4 296.7L47.2 298.4M96.7 208.2L112.3 198.3M133.1 253.1L147.5 255.4M270.2 274.2L257.4 264.2M261.0 282.4L239.8 273.9M117.9 23.3L130.0 16.3M217.1 322.0L226.4 311.4M293.9 306.7L302.0 281.4M170.7 40.4L186.1 38.7M340.9 111.4L347.2 123.9M260.9 229.4L236.1 229.5M232.3 244.8L236.1 229.5M115.7 265.0L97.8 266.1M56.0 197.5L55.4 185.2M289.9 190.5L291.0 168.6M46.8 228.8L32.8 236.6M69.3 276.3L61.9 295.1M212.6 251.6L193.8 265.2M212.6 30.9L238.7 41.1M104.2 231.5L85.2 224.8M101.4 282.4L87.7 286.5M243.1 330.0L247.3 318.4M197.1 92.3L199.4 106.9M240.5 296.1L251.7 303.2M66.7 338.4L55.6 329.9M229.3 69.0L232.2 53.3M278.4 265.0L300.5 265.3M80.9 329.4L85.2 307.3M55.4 185.2L56.0 172.9M57.4 100.1L91.0 55.3M193.5 310.4L195.5 294.0M186.4 21.1L186.1 38.7M219.1 100.6L219.1 80.4M251.5 157.5L237.7 172.8M149.3 147.6L168.6 161.2M340.9 111.4L314.8 109.9M156.7 61.8L156.4 45.2M307.0 185.2L313.5 163.0M74.6 78.0L101.4 88.0M181.2 59.4L170.7 40.4M121.9 296.1L123.0 275.8M55.6 329.9L45.6 320.1M292.1 244.5L285.8 255.1M316.5 250.2L300.5 265.3M131.6 101.3L133.2 84.2M120.8 115.2L140.6 120.7M153.7 129.9L146.2 106.1M275.4 295.9L287.6 278.0M79.4 344.1L80.9 329.4M226.0 279.5L213.4 291.3M360.4 205.9L358.7 219.8M99.1 43.9L120.2 57.1M304.6 209.7L318.8 213.9M15.5 187.4L30.6 185.1M252.4 249.2L257.4 264.2M285.8 255.1L278.4 265.0M227.4 184.4L207.6 179.5M145.3 13.7L144.2 33.7M322.5 123.4L313.5 148.2M76.6 115.3L84.0 105.4M276.3 174.9L289.9 190.5M217.7 64.8L219.1 80.4M185.4 142.0L177.6 128.6M76.6 255.1L92.5 253.0M358.7 219.8L355.7 233.5M16.8 257.2L14.9 243.3M133.1 69.0L131.4 41.4M278.4 265.0L271.2 251.6M214.9 146.9L236.8 138.5M84.0 105.4L92.2 96.2M92.8 177.3L89.3 153.9M234.2 109.1L251.0 126.5M92.1 319.7L111.4 332.8M52.9 245.6L32.8 236.6M355.7 233.5L341.4 230.0M179.7 334.8L161.4 324.1M14.9 243.3L14.2 229.3M189.5 346.5L195.0 329.3M229.3 301.4L217.7 305.6M217.1 322.0L195.0 329.3M170.9 113.4L159.1 98.8M264.3 52.4L270.4 74.7M188.1 193.5L203.1 199.3M60.8 148.7L46.1 142.6M64.4 315.0L80.9 329.4M159.1 211.0L179.2 213.3M125.7 188.8L114.0 168.5M193.4 170.3L168.6 161.2M316.2 289.9L305.5 298.9M300.7 99.2L289.0 86.6M316.5 250.2L312.5 231.6M64.4 315.0L85.2 307.3M217.7 305.6L205.7 308.6M249.9 110.3L251.0 126.5M229.8 334.7L217.1 322.0M239.4 199.4L237.7 172.8M305.5 298.9L293.9 306.7M217.7 305.6L226.4 311.4M229.3 69.0L244.4 59.3M213.8 268.4L213.4 291.3M300.5 265.3L287.6 278.0M156.7 61.8L168.9 60.0M240.5 74.3L242.9 96.3M133.1 301.4L137.9 273.8M121.1 226.8L135.4 230.4M27.5 147.3L33.7 134.7M14.0 215.3L33.3 213.7M331.6 241.6L341.4 230.0M356.4 150.2L333.9 162.9M212.6 30.9L225.6 36.1M74.6 78.0L91.0 55.3M133.1 301.4L121.9 296.1M57.8 209.7L74.2 210.7M251.5 157.5L262.8 145.8M69.3 276.3L55.9 277.9M170.9 113.4L189.6 120.1M238.7 41.1L232.2 53.3M191.8 249.0L193.8 265.2M24.5 284.0L38.7 281.8M178.3 239.1L161.1 237.3M135.6 168.1L150.2 162.7M121.9 74.3L100.7 66.3M314.8 109.9L322.5 123.4M240.5 74.3L219.1 80.4M81.3 184.1L67.8 186.7M314.8 109.9L306.0 132.4M40.8 122.7L46.1 142.6M99.5 299.2L105.9 315.0M175.4 176.9L168.6 161.2M92.8 348.1L111.4 332.8M241.5 309.0L226.4 311.4M137.9 273.8L133.1 253.1M144.7 64.8L156.7 61.8M257.4 264.2L271.2 251.6M152.5 336.6L137.4 320.5M56.0 172.9L71.2 173.4M82.9 66.8L100.7 66.3M108.8 153.3L123.3 156.2M18.3 173.7L30.6 185.1M326.6 226.4L318.8 213.9M343.9 199.5L340.0 214.0M214.9 146.9L215.9 167.4M236.8 138.5L251.0 126.5M133.1 253.1L118.9 248.3M16.8 257.2L31.5 252.0M205.7 61.8L191.4 75.5M217.7 305.6L213.4 291.3M22.3 160.2L27.5 147.3M191.4 75.5L219.1 80.4M56.0 172.9L67.8 186.7M84.0 265.0L97.8 266.1M66.0 89.1L84.0 105.4M92.1 319.7L105.9 315.0M92.8 177.3L87.1 197.5M222.8 199.8L239.4 199.4M215.9 167.4L227.4 184.4M260.9 229.4L282.3 222.9M199.6 25.8L212.6 30.9M131.6 101.3L120.8 115.2M84.6 246.1L92.5 253.0M268.9 319.4L275.4 295.9M229.8 334.7L216.5 338.9M278.4 105.4L289.0 86.6M189.5 346.5L179.7 334.8M292.1 244.5L276.4 236.9M186.4 21.1L170.7 40.4M338.8 143.8L322.5 123.4M229.3 301.4L241.5 309.0M74.6 78.0L82.9 66.8M149.3 147.6L153.7 129.9M188.1 193.5L207.6 179.5M240.5 74.3L251.1 80.6M288.3 66.9L300.1 74.4M322.5 123.4L306.0 132.4M316.2 289.9L302.0 281.4M213.8 268.4L226.0 279.5M65.0 137.1L83.2 137.3M111.3 80.6L133.2 84.2M178.0 258.9L163.5 257.5M256.8 215.1L260.9 229.4M229.8 334.7L231.5 320.6M76.6 255.1L84.6 246.1M99.6 129.8L89.3 153.9M260.9 229.4L252.4 249.2M199.1 278.8L193.8 265.2M134.2 354.5L120.3 353.6M219.1 100.6L199.4 106.9M125.7 188.8L107.0 182.5M70.3 244.5L79.2 235.5M236.1 229.5L219.9 236.4M292.1 244.5L300.5 265.3M33.3 213.7L41.2 198.5M159.1 98.8L180.0 99.2M135.6 168.1L114.0 168.5M92.8 348.1L92.1 319.7M228.7 159.1L237.7 172.8M180.0 99.2L199.4 106.9M178.5 292.6L195.5 294.0M340.9 111.4L322.5 123.4M307.0 185.2L323.7 174.0M197.1 92.3L175.2 81.3M120.3 353.6L134.6 337.0M61.9 295.1L76.0 296.9M193.5 310.4L195.0 329.3M307.0 185.2L289.9 190.5M281.4 207.7L282.3 222.9M144.7 305.6L133.1 301.4M352.9 136.7L356.4 150.2M276.1 152.4L284.8 135.1M122.9 321.6L134.6 337.0M188.1 193.5L179.2 213.3M121.9 296.1L99.5 299.2M200.2 136.2L185.4 142.0M229.3 69.0L240.5 74.3M153.7 129.9L135.3 139.3M45.6 320.1L47.2 298.4M147.8 87.1L133.2 84.2M57.8 160.7L60.8 148.7M159.1 211.0L152.3 194.1M199.1 278.8L182.8 275.0M212.5 116.2L234.2 109.1M111.4 332.8L134.6 337.0M189.6 120.1L212.5 116.2M170.9 113.4L180.0 99.2M104.2 231.5L109.0 218.4M175.4 176.9L193.4 170.3M30.6 185.1L41.2 198.5M152.5 336.6L161.4 324.1M205.7 61.8L216.8 47.2M217.7 305.6L217.1 322.0M85.2 224.8L79.2 235.5M205.7 61.8L201.1 44.8M264.3 52.4L244.4 59.3M56.0 172.9L38.6 165.0M262.8 145.8L263.5 167.9M76.6 255.1L70.3 244.5M261.0 282.4L275.4 295.9M92.8 177.3L114.0 168.5M270.2 274.2L261.0 282.4M215.9 167.4L207.6 179.5M178.3 239.1L170.4 225.2M70.3 244.5L64.8 257.1M155.8 290.1L169.2 281.2M251.5 157.5L228.7 159.1M215.9 167.4L192.7 155.3M261.0 88.0L270.4 74.7M270.2 274.2L287.6 278.0M65.0 233.3L46.8 228.8M55.6 329.9L64.4 315.0M133.1 301.4L137.4 320.5M276.1 152.4L262.8 145.8M356.4 150.2L338.8 143.8M101.4 88.0L111.3 80.6M307.0 185.2L306.4 197.5M323.3 90.0L314.8 109.9M336.5 270.6L322.5 263.7M311.7 82.1L300.7 99.2M175.4 176.9L188.1 193.5M14.3 201.3L41.2 198.5M278.4 105.4L264.4 111.1M168.9 310.4L161.4 324.1M56.0 172.9L57.8 160.7M89.3 153.9L76.0 160.2M360.0 178.0L342.6 178.3M45.6 320.1L37.2 308.9M151.4 178.1L150.2 162.7M324.4 198.2L318.8 213.9M22.3 160.2L38.6 165.0M158.4 271.2L169.2 281.2M85.2 224.8L94.4 238.7M326.6 226.4L312.5 231.6M147.8 87.1L159.1 98.8M144.7 64.8L133.2 84.2M281.4 207.7L267.4 202.0M64.4 315.0L76.0 296.9M276.1 152.4L291.0 168.6M31.5 252.0L52.9 245.6M258.2 312.4L251.7 303.2M20.0 270.8L48.3 263.0M276.4 236.9L282.3 222.9M178.5 292.6L169.2 281.2M133.1 253.1L135.4 230.4M107.0 182.5L87.1 197.5M284.8 135.1L291.6 153.9M297.4 233.3L282.3 222.9M84.0 105.4L99.4 111.1M239.8 273.9L226.0 279.5M121.5 212.0L112.3 198.3M258.3 181.9L237.7 172.8M214.9 146.9L225.6 123.1M219.1 100.6L242.9 96.3M181.2 59.4L175.2 81.3M159.1 211.0L147.4 220.2M99.6 129.8L119.9 133.0M322.5 263.7L331.6 241.6M275.4 295.9L251.7 303.2M300.1 74.4L289.0 86.6M201.1 44.8L186.1 38.7M355.7 233.5L350.4 246.4M96.7 208.2L109.0 218.4M333.9 162.9L313.5 148.2M156.7 61.8L161.0 78.2M301.6 221.7L318.8 213.9M304.6 209.7L281.4 207.7M170.6 194.0L159.1 211.0M147.4 220.2L170.4 225.2M69.3 276.3L80.4 278.0M92.8 177.3L71.2 173.4M256.8 215.1L239.4 199.4M55.4 185.2L41.2 198.5M121.9 74.3L120.2 57.1M347.2 123.9L352.9 136.7M193.0 223.1L213.6 211.6M115.7 265.0L123.0 275.8M48.3 263.0L52.9 245.6M219.1 80.4L242.9 96.3M92.8 177.3L76.0 160.2M291.0 168.6L291.6 153.9M219.1 100.6L234.2 109.1M119.9 133.0L135.3 139.3M158.4 271.2L155.8 290.1M181.2 311.0L179.7 334.8M131.6 101.3L116.8 98.2M112.3 198.3L109.0 218.4M99.6 129.8L120.8 115.2M92.5 253.0L94.4 238.7M251.1 289.8L239.8 273.9M338.8 143.8L313.5 148.2M38.7 281.8L48.3 263.0M101.4 88.0L100.7 66.3M70.3 244.5L52.9 245.6M197.1 92.3L191.4 75.5M267.4 202.0L239.4 199.4M159.1 211.0L170.4 225.2M333.9 162.9L342.6 178.3M181.2 311.0L195.5 294.0M168.9 60.0L170.7 40.4M144.7 305.6L155.8 290.1M27.5 147.3L46.1 142.6M141.1 205.4L152.3 194.1M161.4 324.1L137.4 320.5M323.7 174.0L342.6 178.3M227.4 184.4L237.7 172.8M278.4 265.0L270.2 274.2M284.8 135.1L262.8 145.8M199.6 25.8L201.1 44.8M216.5 338.9L195.0 329.3M14.3 201.3L30.6 185.1M76.6 255.1L73.0 264.9M179.7 334.8L195.0 329.3M199.6 25.8L186.1 38.7M92.2 96.2L101.4 88.0M135.4 230.4L118.9 248.3M115.7 265.0L105.9 259.0M358.7 219.8L340.0 214.0M191.8 249.0L178.0 258.9M123.3 156.2L135.3 139.3M111.3 289.8L123.0 275.8M144.7 64.8L131.4 41.4M38.7 281.8L55.9 277.9M92.8 177.3L107.0 182.5M267.4 202.0L258.3 181.9M193.0 223.1L191.8 249.0M14.2 229.3L14.0 215.3M212.6 30.9L216.8 47.2M66.7 338.4L80.9 329.4M212.6 30.9L201.1 44.8M306.0 132.4L284.8 135.1M131.4 41.4L144.2 33.7M121.5 212.0L141.1 205.4M350.4 246.4L341.4 230.0M61.9 295.1L47.2 298.4M205.7 308.6L193.5 310.4M276.3 59.6L270.4 74.7M222.8 199.8L230.1 214.8M256.8 215.1L236.1 229.5M293.9 306.7L281.5 313.2M261.0 282.4L257.4 264.2M236.8 138.5L225.6 123.1M278.4 105.4L300.7 99.2M293.9 306.7L275.4 295.9M276.3 174.9L291.0 168.6M56.0 197.5L67.8 186.7M212.5 116.2L199.4 106.9M312.5 231.6L331.6 241.6M168.9 60.0L181.2 59.4M302.0 281.4L322.5 263.7M188.1 193.5L193.4 170.3M133.1 301.4L122.9 321.6M297.4 233.3L316.5 250.2M101.4 88.0L116.8 98.2M99.6 129.8L83.2 137.3M131.6 101.3L140.6 120.7M312.5 231.6L318.8 213.9M33.7 134.7L40.8 122.7M65.0 137.1L46.1 142.6M199.1 278.8L213.8 268.4M251.1 80.6L242.9 96.3M225.6 36.1L238.7 41.1M104.2 231.5L118.9 248.3M117.9 23.3L131.4 41.4M195.5 294.0L182.8 275.0M99.6 129.8L99.4 111.1M55.4 185.2L30.6 185.1M74.6 78.0L92.2 96.2M121.9 296.1L111.3 289.8M178.3 239.1L191.8 249.0M66.0 89.1L91.0 55.3M14.3 201.3L33.3 213.7M323.7 174.0L324.4 198.2M240.5 74.3L244.4 59.3M170.6 194.0L151.4 178.1M203.1 342.9L189.5 346.5M92.2 274.2L80.4 278.0M274.9 122.8L284.8 135.1M120.3 353.6L111.4 332.8M108.8 153.3L99.6 129.8M168.9 60.0L156.4 45.2M82.9 66.8L101.4 88.0M96.7 208.2L87.1 197.5M145.3 13.7L130.0 16.3M141.1 205.4L147.4 220.2M200.2 136.2L192.7 155.3M251.1 80.6L261.0 88.0M222.8 199.8L213.6 211.6M61.9 295.1L64.4 315.0M193.0 223.1L203.1 199.3M130.0 16.3L131.4 41.4M107.9 33.0L120.2 57.1M91.0 55.3L99.1 43.9M148.2 353.8L134.6 337.0M340.0 214.0L341.4 230.0M258.2 312.4L247.3 318.4M102.0 248.9L94.4 238.7M20.0 270.8L38.7 281.8M251.0 126.5L264.4 111.1M229.3 69.0L219.1 80.4M76.6 115.3L99.6 129.8M189.6 120.1L199.4 106.9M181.2 59.4L191.4 75.5M56.0 197.5L74.2 210.7M299.6 114.8L284.8 135.1M153.7 129.9L140.6 120.7M168.6 161.2L150.2 162.7M87.7 286.5L80.4 278.0M101.4 282.4L97.8 266.1M212.6 251.6L232.3 244.8M258.3 181.9L239.4 199.4M14.9 243.3L32.8 236.6M200.2 136.2L189.6 120.1M114.0 168.5L107.0 182.5M91.0 55.3L100.7 66.3M112.3 198.3L87.1 197.5M71.2 173.4L76.0 160.2M350.4 246.4L331.6 241.6M47.2 298.4L64.4 315.0M71.2 173.4L67.8 186.7M20.0 270.8L31.5 252.0M301.6 221.7L312.5 231.6M158.4 271.2L178.0 258.9M361.1 191.9L343.9 199.5M216.5 338.9L217.1 322.0M215.9 167.4L193.4 170.3M64.8 257.1L73.0 264.9M276.3 174.9L258.3 181.9M57.8 160.7L71.2 173.4M314.8 109.9L299.6 114.8M238.7 41.1L244.4 59.3M125.7 188.8L152.3 194.1M147.0 240.7L161.1 237.3M102.0 248.9L105.9 259.0M121.9 296.1L137.9 273.8M216.5 338.9L203.1 342.9M135.6 168.1L123.3 156.2M33.3 213.7L32.8 236.6M173.0 17.2L159.2 29.0M57.8 160.7L76.0 160.2M203.1 199.3L213.6 211.6M208.3 226.6L219.9 236.4M131.4 41.4L156.4 45.2M175.2 81.3L180.0 99.2M87.7 286.5L85.2 307.3M358.3 164.1L333.9 162.9M122.9 321.6L137.4 320.5M276.1 152.4L291.6 153.9M82.9 66.8L91.0 55.3M261.0 88.0L264.4 111.1M219.9 236.4L230.1 214.8M300.1 74.4L311.7 82.1M65.0 233.3L85.2 224.8M214.9 146.9L192.7 155.3M191.4 75.5L175.2 81.3M231.5 320.6L247.3 318.4M70.3 244.5L65.0 233.3M225.6 123.1L212.5 116.2M333.9 162.9L313.5 163.0M158.4 271.2L163.5 257.5M89.3 153.9L83.2 137.3M311.7 82.1L323.3 90.0M120.3 353.6L106.5 351.3M84.0 265.0L80.4 278.0M70.3 125.9L83.2 137.3M125.7 188.8L112.3 198.3M177.6 128.6L189.6 120.1M236.1 229.5L230.1 214.8M65.0 233.3L60.8 221.7M99.5 299.2L85.2 307.3M197.1 92.3L180.0 99.2M229.3 301.4L226.0 279.5M106.5 351.3L92.8 348.1M40.8 122.7L70.3 125.9M306.4 197.5L304.6 209.7M141.1 205.4L125.7 188.8M104.2 231.5L121.1 226.8M100.7 66.3L120.2 57.1M60.8 221.7L46.8 228.8M140.6 120.7L146.2 106.1M356.4 150.2L358.3 164.1M121.9 74.3L133.2 84.2M178.3 239.1L193.0 223.1M200.2 136.2L225.6 123.1M48.9 111.2L76.6 115.3M122.9 321.6L105.9 315.0M212.6 251.6L208.3 226.6M70.3 244.5L84.6 246.1M304.6 209.7L301.6 221.7M156.4 45.2L159.2 29.0M181.2 311.0L195.0 329.3M226.0 279.5L228.0 259.8M200.2 136.2L212.5 116.2M256.8 215.1L282.3 222.9M14.9 243.3L31.5 252.0M358.3 164.1L360.0 178.0M222.8 199.8L203.1 199.3M37.2 308.9L30.4 296.7M323.3 90.0L300.7 99.2M205.7 308.6L213.4 291.3M60.8 148.7L65.0 137.1M178.0 258.9L193.8 265.2M92.1 319.7L80.9 329.4M324.4 198.2L342.6 178.3M225.6 123.1L234.2 109.1M92.1 319.7L85.2 307.3M111.4 332.8L105.9 315.0M274.9 122.8L264.4 111.1M30.4 296.7L24.5 284.0M55.9 277.9L48.3 263.0M240.5 296.1L226.0 279.5M156.7 308.6L137.4 320.5M57.8 209.7L41.2 198.5M306.4 197.5L289.9 190.5M131.6 101.3L147.8 87.1M347.2 123.9L338.8 143.8M185.4 142.0L189.6 120.1M162.1 352.0L152.5 336.6M350.4 246.4L344.1 258.9M256.8 215.1L230.1 214.8M215.9 167.4L237.7 172.8M111.3 289.8L99.5 299.2M261.0 282.4L251.1 289.8M74.2 210.7L87.1 197.5M307.0 185.2L291.0 168.6M147.0 240.7L147.4 220.2M281.4 207.7L289.9 190.5M285.8 255.1L276.4 236.9M170.9 113.4L177.6 128.6M175.9 349.5L179.7 334.8M37.2 308.9L47.2 298.4M316.5 250.2L331.6 241.6M195.5 294.0L213.4 291.3M344.1 258.9L336.5 270.6M118.9 248.3L105.9 259.0M111.3 80.6L121.9 74.3M69.3 276.3L76.0 296.9M252.4 249.2L232.3 244.8M178.0 258.9L182.8 275.0M45.6 320.1L64.4 315.0M313.5 148.2L291.6 153.9M213.8 268.4L228.0 259.8M14.3 201.3L15.5 187.4M305.5 298.9L302.0 281.4M276.3 174.9L276.1 152.4M191.8 249.0L212.6 251.6M301.6 221.7L281.4 207.7M193.0 223.1L179.2 213.3M159.2 14.5L173.0 17.2M251.1 289.8L275.4 295.9M46.8 228.8L52.9 245.6M102.0 248.9L92.5 253.0M115.7 265.0L118.9 248.3M181.2 311.0L168.9 310.4M256.2 325.1L247.3 318.4M65.0 233.3L79.2 235.5M149.3 147.6L150.2 162.7M251.1 289.8L251.7 303.2M159.1 98.8L146.2 106.1M217.7 64.8L232.2 53.3M87.7 286.5L99.5 299.2M121.5 212.0L121.1 226.8M285.8 255.1L300.5 265.3M347.2 123.9L322.5 123.4M361.1 191.9L342.6 178.3M40.8 122.7L65.0 137.1M307.0 185.2L324.4 198.2M193.5 60.0L205.7 61.8M114.0 168.5L123.3 156.2M27.5 147.3L38.6 165.0M94.4 238.7L79.2 235.5M256.8 215.1L267.4 202.0M92.8 348.1L80.9 329.4M306.4 197.5L318.8 213.9M121.5 212.0L109.0 218.4M181.2 311.0L178.5 292.6M276.1 152.4L263.5 167.9M268.9 319.4L258.2 312.4M205.7 61.8L219.1 80.4M252.4 249.2L239.8 273.9M84.0 265.0L92.5 253.0M178.0 258.9L169.2 281.2M216.8 47.2L232.2 53.3M182.8 275.0L193.8 265.2M285.8 255.1L271.2 251.6M170.9 113.4L146.2 106.1M133.1 301.4L155.8 290.1M244.4 59.3L232.2 53.3M108.8 153.3L89.3 153.9M191.8 249.0L208.3 226.6M234.2 109.1L242.9 96.3M217.7 64.8L216.8 47.2M205.7 308.6L217.1 322.0M159.1 98.8L161.0 78.2M84.6 246.1L79.2 235.5M149.3 147.6L135.6 168.1M57.8 160.7L46.1 142.6M14.0 215.3L14.3 201.3M170.9 113.4L153.7 129.9M270.2 96.2L270.4 74.7M145.3 13.7L159.2 14.5M313.5 163.0L291.6 153.9M249.9 110.3L242.9 96.3M125.7 188.8L151.4 178.1M152.5 336.6L179.7 334.8M193.5 310.4L181.2 311.0M205.7 308.6L195.5 294.0M131.6 101.3L146.2 106.1M92.1 319.7L99.5 299.2M222.8 199.8L207.6 179.5M144.7 64.8L156.4 45.2M111.4 332.8L122.9 321.6M333.5 99.5L314.8 109.9M260.9 229.4L276.4 236.9M281.5 313.2L268.9 319.4M149.3 147.6L135.3 139.3M326.8 280.7L322.5 263.7M179.2 213.3L170.4 225.2M251.0 126.5L262.8 145.8M306.0 132.4L291.6 153.9M181.2 59.4L193.5 60.0M156.7 308.6L161.4 324.1M216.8 47.2L201.1 44.8M212.6 251.6L219.9 236.4M268.9 319.4L256.2 325.1M40.8 122.7L48.9 111.2M85.2 224.8L109.0 218.4M252.4 249.2L271.2 251.6M84.6 246.1L94.4 238.7M278.4 105.4L274.9 122.8M238.7 41.1L251.8 46.1" stroke="#111" stroke-width="0.9" fill="none"/>
<path d="M145.3 13.7 L147.3 13.7 L149.3 13.7 L151.3 13.8 L153.4 13.9 L155.4 14.0 L157.4 14.2 L159.4 14.5 L161.3 14.8 L163.3 15.1 L165.3 15.5 L167.2 15.9 L169.2 16.3 L171.1 16.7 L173.1 17.2 L175.0 17.7 L176.9 18.2 L178.8 18.8 L180.7 19.4 L182.7 19.9 L184.6 20.5 L186.5 21.2 L188.4 21.8 L190.3 22.4 L192.1 23.1 L194.0 23.8 L195.9 24.4 L197.8 25.1 L199.7 25.8 L201.5 26.5 L203.4 27.2 L205.3 28.0 L207.1 28.7 L209.0 29.4 L210.8 30.2 L212.7 30.9 L214.6 31.6 L216.4 32.4 L218.3 33.1 L220.1 33.9 L222.0 34.6 L223.8 35.4 L225.7 36.1 L227.6 36.8 L229.4 37.6 L231.3 38.3 L233.2 39.0 L235.0 39.7 L236.9 40.4 L238.8 41.1 L240.6 41.8 L242.5 42.5 L244.4 43.2 L246.2 43.9 L248.1 44.6 L249.9 45.4 L251.8 46.2 L253.6 47.0 L255.4 47.8 L257.2 48.6 L259.0 49.5 L260.7 50.5 L262.5 51.4 L264.2 52.4 L266.0 53.4 L267.7 54.4 L269.4 55.4 L271.1 56.4 L272.8 57.5 L274.5 58.5 L276.3 59.5 L278.0 60.6 L279.7 61.6 L281.4 62.6 L283.1 63.7 L284.8 64.7 L286.5 65.8 L288.2 66.8 L289.9 67.9 L291.6 68.9 L293.3 70.0 L295.0 71.1 L296.7 72.2 L298.3 73.2 L300.0 74.3 L301.7 75.4 L303.3 76.5 L305.0 77.6 L306.7 78.7 L308.3 79.9 L310.0 81.0 L311.7 82.1 L313.3 83.2 L315.0 84.3 L316.7 85.4 L318.3 86.5 L320.0 87.7 L321.6 88.8 L323.2 90.0 L324.8 91.1 L326.3 92.4 L327.8 93.6 L329.3 94.9 L330.6 96.3 L332.0 97.7 L333.2 99.2 L334.4 100.7 L335.6 102.3 L336.6 103.9 L337.7 105.5 L338.7 107.2 L339.6 109.0 L340.6 110.7 L341.5 112.5 L342.4 114.3 L343.3 116.0 L344.2 117.8 L345.1 119.6 L346.0 121.4 L346.9 123.2 L347.7 125.0 L348.6 126.8 L349.5 128.6 L350.3 130.4 L351.1 132.2 L351.8 134.1 L352.6 135.9 L353.2 137.8 L353.9 139.6 L354.4 141.5 L354.9 143.4 L355.4 145.3 L355.8 147.3 L356.2 149.2 L356.5 151.2 L356.9 153.1 L357.1 155.1 L357.4 157.1 L357.7 159.1 L357.9 161.1 L358.2 163.0 L358.4 165.0 L358.7 167.0 L358.9 169.0 L359.2 171.0 L359.4 173.0 L359.7 174.9 L359.9 176.9 L360.1 178.9 L360.3 180.9 L360.5 182.9 L360.7 184.9 L360.9 186.9 L361.0 188.8 L361.0 190.8 L361.1 192.8 L361.1 194.8 L361.0 196.8 L360.9 198.8 L360.8 200.7 L360.7 202.7 L360.5 204.7 L360.3 206.7 L360.1 208.7 L359.8 210.7 L359.6 212.7 L359.4 214.6 L359.1 216.6 L358.8 218.6 L358.5 220.6 L358.2 222.5 L357.9 224.5 L357.5 226.4 L357.1 228.4 L356.6 230.3 L356.1 232.2 L355.5 234.1 L354.9 235.9 L354.2 237.8 L353.5 239.6 L352.7 241.4 L351.9 243.3 L351.1 245.1 L350.2 246.9 L349.3 248.7 L348.4 250.4 L347.5 252.2 L346.6 254.0 L345.7 255.8 L344.8 257.5 L343.8 259.3 L342.9 261.0 L341.9 262.7 L340.9 264.4 L339.8 266.1 L338.7 267.7 L337.5 269.3 L336.3 270.9 L335.1 272.4 L333.8 273.8 L332.4 275.3 L331.0 276.7 L329.6 278.1 L328.2 279.4 L326.7 280.8 L325.2 282.1 L323.7 283.4 L322.2 284.7 L320.7 286.1 L319.2 287.4 L317.7 288.7 L316.2 290.0 L314.7 291.3 L313.1 292.6 L311.6 293.9 L310.1 295.2 L308.6 296.5 L307.0 297.7 L305.4 298.9 L303.9 300.1 L302.2 301.3 L300.6 302.4 L299.0 303.5 L297.3 304.6 L295.6 305.6 L293.9 306.7 L292.2 307.6 L290.4 308.6 L288.7 309.5 L286.9 310.5 L285.1 311.4 L283.3 312.3 L281.5 313.2 L279.8 314.1 L278.0 315.0 L276.2 315.9 L274.4 316.8 L272.6 317.6 L270.8 318.5 L269.0 319.4 L267.2 320.3 L265.4 321.1 L263.6 321.9 L261.8 322.7 L259.9 323.5 L258.1 324.3 L256.2 325.1 L254.4 325.8 L252.5 326.5 L250.7 327.3 L248.8 328.0 L246.9 328.7 L245.0 329.3 L243.1 330.0 L241.3 330.7 L239.4 331.4 L237.5 332.0 L235.6 332.7 L233.7 333.3 L231.8 334.0 L229.9 334.6 L228.0 335.3 L226.1 335.9 L224.2 336.5 L222.3 337.1 L220.4 337.7 L218.5 338.3 L216.6 338.9 L214.7 339.5 L212.8 340.1 L210.9 340.6 L208.9 341.2 L207.0 341.7 L205.1 342.3 L203.2 342.8 L201.3 343.4 L199.3 343.9 L197.4 344.4 L195.5 345.0 L193.5 345.5 L191.6 346.0 L189.7 346.4 L187.7 346.9 L185.8 347.4 L183.8 347.8 L181.9 348.2 L179.9 348.7 L178.0 349.1 L176.0 349.5 L174.0 349.9 L172.1 350.3 L170.1 350.6 L168.1 351.0 L166.2 351.3 L164.2 351.7 L162.2 352.0 L160.3 352.3 L158.3 352.6 L156.3 352.8 L154.3 353.1 L152.3 353.3 L150.4 353.6 L148.4 353.8 L146.4 354.0 L144.4 354.1 L142.4 354.3 L140.4 354.4 L138.4 354.5 L136.4 354.5 L134.4 354.5 L132.4 354.5 L130.5 354.4 L128.5 354.3 L126.5 354.2 L124.5 354.1 L122.5 353.9 L120.5 353.7 L118.6 353.4 L116.6 353.1 L114.6 352.8 L112.6 352.5 L110.7 352.1 L108.7 351.8 L106.8 351.4 L104.8 351.0 L102.8 350.6 L100.9 350.1 L99.0 349.7 L97.0 349.2 L95.1 348.7 L93.1 348.2 L91.2 347.7 L89.3 347.1 L87.4 346.6 L85.4 346.0 L83.5 345.5 L81.6 344.9 L79.7 344.2 L77.9 343.6 L76.0 342.9 L74.2 342.2 L72.4 341.4 L70.6 340.6 L68.9 339.7 L67.2 338.7 L65.5 337.7 L63.9 336.7 L62.3 335.5 L60.7 334.3 L59.2 333.1 L57.7 331.8 L56.2 330.5 L54.7 329.2 L53.3 327.8 L51.8 326.4 L50.4 325.0 L49.0 323.6 L47.6 322.2 L46.2 320.8 L44.9 319.3 L43.6 317.8 L42.4 316.3 L41.1 314.7 L40.0 313.1 L38.8 311.5 L37.8 309.9 L36.7 308.2 L35.7 306.5 L34.7 304.7 L33.7 303.0 L32.8 301.3 L31.8 299.5 L30.9 297.7 L30.0 295.9 L29.1 294.2 L28.2 292.4 L27.3 290.6 L26.5 288.8 L25.7 287.0 L24.9 285.1 L24.2 283.3 L23.4 281.4 L22.8 279.6 L22.1 277.7 L21.5 275.8 L20.9 273.9 L20.3 272.0 L19.8 270.1 L19.3 268.1 L18.8 266.2 L18.3 264.3 L17.9 262.3 L17.4 260.4 L17.0 258.4 L16.6 256.5 L16.3 254.5 L16.0 252.5 L15.7 250.6 L15.4 248.6 L15.2 246.6 L15.1 244.6 L14.9 242.7 L14.8 240.7 L14.6 238.7 L14.5 236.7 L14.4 234.7 L14.3 232.7 L14.3 230.7 L14.2 228.7 L14.1 226.7 L14.1 224.7 L14.0 222.7 L14.0 220.7 L14.0 218.7 L14.0 216.7 L14.0 214.7 L14.0 212.7 L14.0 210.7 L14.1 208.7 L14.1 206.7 L14.2 204.7 L14.2 202.7 L14.3 200.7 L14.4 198.7 L14.5 196.7 L14.7 194.7 L14.9 192.8 L15.1 190.8 L15.3 188.8 L15.6 186.8 L15.9 184.9 L16.3 182.9 L16.6 181.0 L17.1 179.0 L17.5 177.1 L18.0 175.1 L18.5 173.2 L19.0 171.3 L19.5 169.3 L20.0 167.4 L20.6 165.5 L21.2 163.6 L21.8 161.7 L22.5 159.8 L23.1 158.0 L23.8 156.1 L24.6 154.2 L25.3 152.4 L26.1 150.5 L26.9 148.7 L27.7 146.9 L28.5 145.1 L29.4 143.3 L30.2 141.5 L31.1 139.7 L32.0 137.9 L32.9 136.1 L33.8 134.3 L34.8 132.6 L35.8 130.9 L36.8 129.1 L37.8 127.4 L38.9 125.7 L39.9 124.1 L41.0 122.4 L42.1 120.7 L43.3 119.1 L44.4 117.4 L45.6 115.8 L46.7 114.2 L47.9 112.6 L49.1 111.0 L50.3 109.4 L51.5 107.8 L52.7 106.2 L53.9 104.6 L55.1 103.0 L56.3 101.4 L57.6 99.8 L58.8 98.2 L60.0 96.7 L61.3 95.1 L62.5 93.5 L63.7 92.0 L65.0 90.4 L66.2 88.8 L67.5 87.2 L68.7 85.7 L69.9 84.1 L71.1 82.5 L72.4 80.9 L73.6 79.3 L74.8 77.8 L76.0 76.2 L77.2 74.6 L78.4 73.0 L79.6 71.4 L80.8 69.7 L81.9 68.1 L83.1 66.5 L84.3 64.9 L85.4 63.2 L86.6 61.6 L87.7 60.0 L88.9 58.3 L90.0 56.7 L91.1 55.0 L92.3 53.4 L93.4 51.7 L94.6 50.1 L95.7 48.5 L96.9 46.9 L98.0 45.2 L99.2 43.6 L100.4 42.0 L101.7 40.5 L102.9 38.9 L104.2 37.4 L105.5 35.8 L106.8 34.3 L108.1 32.8 L109.4 31.4 L110.8 29.9 L112.2 28.5 L113.6 27.1 L115.1 25.8 L116.5 24.5 L118.0 23.2 L119.6 22.0 L121.2 20.9 L122.8 19.8 L124.5 18.9 L126.2 18.0 L127.9 17.2 L129.7 16.5 L131.5 15.8 L133.4 15.3 L135.3 14.9 L137.3 14.5 L139.3 14.2 L141.2 14.0 L143.3 13.8Z" fill="none" stroke="#222" stroke-width="1"/>
</svg>
</body></html>
